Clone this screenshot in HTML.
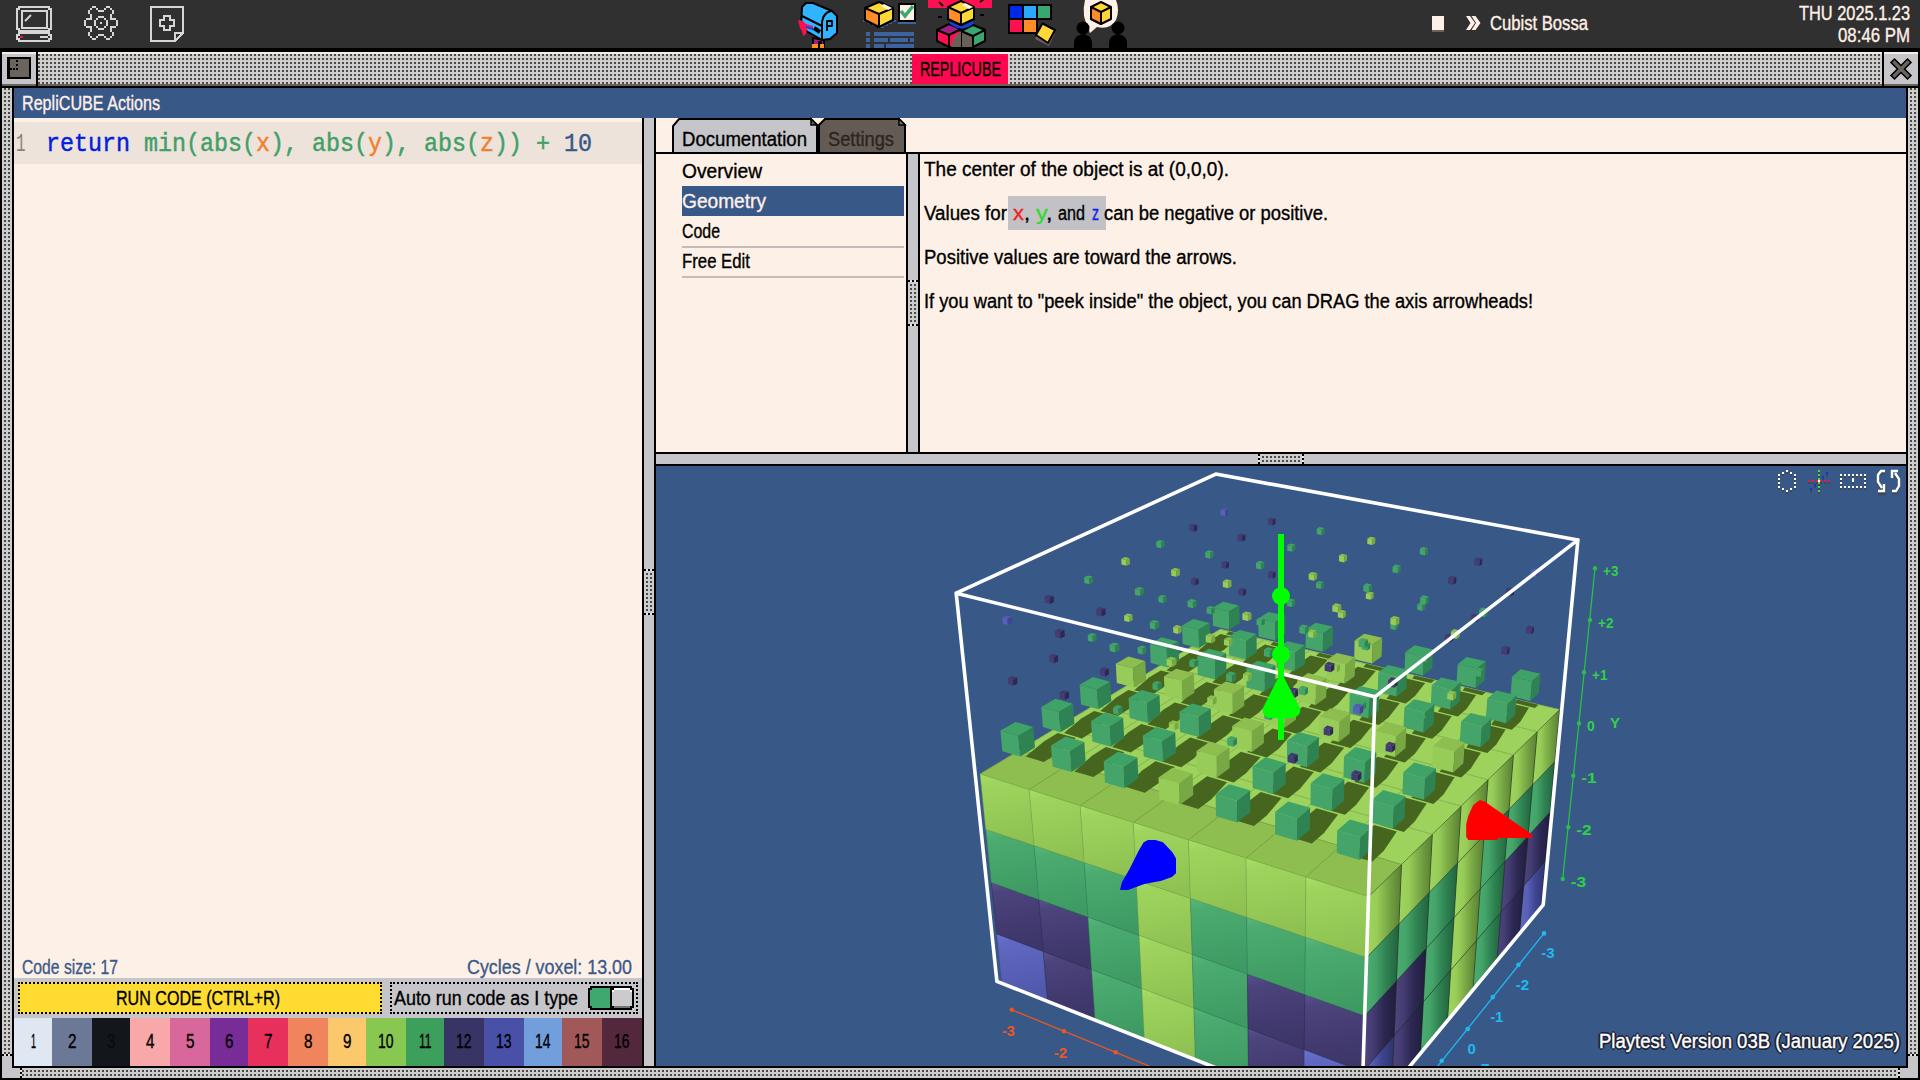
<!DOCTYPE html><html><head><meta charset="utf-8"><title>Replicube</title><style>
html,body{margin:0;padding:0;background:#000;}
body{width:1920px;height:1080px;position:relative;overflow:hidden;font-family:"Liberation Sans",sans-serif;}
.a{position:absolute;}
.tx{position:absolute;white-space:nowrap;line-height:1;transform-origin:0 0;display:inline-block;-webkit-text-stroke:0.35px currentColor;}
.dots{background-color:#c6c6ca;background-image:linear-gradient(#544c44,#544c44);background-size:4px 4px;}
.dotp{background-color:#4c4a40;background-image:linear-gradient(#cdcdd0 50%,transparent 50%),linear-gradient(90deg,#cdcdd0 50%,transparent 50%);background-size:4px 4px;}
.code{position:absolute;left:45.5px;top:130px;font-family:"Liberation Mono",monospace;font-size:25.6px;line-height:30px;white-space:pre;-webkit-text-stroke:0.45px currentColor;transform:scaleX(0.9115);transform-origin:0 0;}
</style></head><body>
<div class="a" style="left:0px;top:0px;width:1920px;height:48px;background:#303030;"></div>
<div class="a" style="left:0px;top:48px;width:1920px;height:4px;background:#000;"></div>
<div class="a dotp" style="left:0;top:52px;width:1920px;height:34px;background-position:0 0"></div>
<div class="a" style="left:0px;top:52px;width:1920px;height:2px;background:#f4ece6;"></div>
<div class="a" style="left:0px;top:84px;width:1920px;height:2px;background:#6a625a;"></div>
<div class="a" style="left:0px;top:52px;width:2px;height:1028px;background:#000;"></div>
<div class="a" style="left:1918px;top:52px;width:2px;height:1028px;background:#000;"></div>
<div class="a" style="left:2px;top:54px;width:34px;height:30px;background:#c6c6ca;"></div>
<div class="a" style="left:2px;top:52px;width:34px;height:2px;background:#f4ece6;"></div>
<div class="a" style="left:2px;top:84px;width:34px;height:2px;background:#6a625a;"></div>
<div class="a" style="left:36px;top:52px;width:2px;height:34px;background:#000;"></div>
<div class="a" style="left:7px;top:57px;width:24px;height:22px;background:#000;"></div>
<div class="a" style="left:10px;top:59px;width:19px;height:18px;background:#6b645e;"></div>
<div class="a" style="left:16px;top:60px;width:2px;height:2px;background:#000;"></div>
<div class="a" style="left:16px;top:64px;width:2px;height:2px;background:#000;"></div>
<div class="a" style="left:10px;top:68px;width:2px;height:2px;background:#000;"></div>
<div class="a" style="left:13px;top:68px;width:2px;height:2px;background:#000;"></div>
<div class="a" style="left:16px;top:68px;width:2px;height:2px;background:#000;"></div>
<div class="a" style="left:1882px;top:52px;width:2px;height:34px;background:#000;"></div>
<div class="a" style="left:1884px;top:54px;width:34px;height:30px;background:#c6c6ca;"></div>
<div class="a" style="left:1884px;top:52px;width:34px;height:2px;background:#f4ece6;"></div>
<div class="a" style="left:1884px;top:84px;width:34px;height:2px;background:#6a625a;"></div>
<svg class="a" style="left:1888px;top:56px" width="26" height="26" viewBox="0 0 26 26"><path d="M6.500 6.500L19.500 19.500M19.500 6.500L6.500 19.500" stroke="#000" stroke-width="6.5" stroke-linecap="square"/><path d="M6.500 6.500L19.500 19.500M19.500 6.500L6.500 19.500" stroke="#6b645e" stroke-width="3.4" stroke-linecap="square"/></svg>
<div class="a" style="left:912px;top:54px;width:96px;height:30px;background:#ff0850;"></div>
<div class="a" style="left:0px;top:86px;width:1920px;height:2px;background:#000;"></div>
<div class="a dotp" style="left:2px;top:88px;width:10px;height:966px;background-position:0 -2px"></div>
<div class="a" style="left:12px;top:88px;width:2px;height:980px;background:#000;"></div>
<div class="a dotp" style="left:1908px;top:88px;width:10px;height:966px;background-position:0 -2px"></div>
<div class="a" style="left:1906px;top:88px;width:2px;height:980px;background:#000;"></div>
<div class="a" style="left:2px;top:1066px;width:1916px;height:2px;background:#000;"></div>
<div class="a dotp" style="left:22px;top:1068px;width:1876px;height:10px;background-position:-2px 0"></div>
<div class="a" style="left:2px;top:1078px;width:1916px;height:2px;background:#000;"></div>
<div class="a" style="left:2px;top:1054px;width:10px;height:24px;background:#c6c6ca;"></div>
<div class="a" style="left:12px;top:1068px;width:8px;height:10px;background:#c6c6ca;"></div>
<div class="a" style="left:1908px;top:1054px;width:10px;height:24px;background:#c6c6ca;"></div>
<div class="a" style="left:1900px;top:1068px;width:8px;height:10px;background:#c6c6ca;"></div>
<div class="a" style="left:2px;top:1054px;width:10px;height:2px;background:#000;background:repeating-linear-gradient(90deg,#000 0 2px,#e4e4e6 2px 4px);"></div>
<div class="a" style="left:1908px;top:1054px;width:10px;height:2px;background:#000;background:repeating-linear-gradient(90deg,#000 0 2px,#e4e4e6 2px 4px);"></div>
<div class="a" style="left:20px;top:1068px;width:2px;height:10px;background:#000;background:repeating-linear-gradient(180deg,#000 0 2px,#e4e4e6 2px 4px);"></div>
<div class="a" style="left:1898px;top:1068px;width:2px;height:10px;background:#000;background:repeating-linear-gradient(180deg,#000 0 2px,#e4e4e6 2px 4px);"></div>
<div class="a" style="left:14px;top:88px;width:1892px;height:30px;background:#385888;"></div>
<div class="a" style="left:14px;top:118px;width:628px;height:860px;background:#fdf1e7;"></div>
<div class="a" style="left:14px;top:122px;width:628px;height:42px;background:#ede3da;"></div>
<div class="a" style="left:642px;top:118px;width:2px;height:948px;background:#000;"></div>
<div class="a" style="left:644px;top:118px;width:10px;height:948px;background:#c6c6ca;"></div>
<div class="a" style="left:654px;top:118px;width:2px;height:948px;background:#000;"></div>
<div class="a dotp" style="left:644px;top:571px;width:10px;height:42px;background-position:0 0"></div>
<div class="a" style="left:644px;top:569px;width:10px;height:2px;background:#000;background:repeating-linear-gradient(90deg,#000 0 2px,#e4e4e6 2px 4px);"></div>
<div class="a" style="left:644px;top:613px;width:10px;height:2px;background:#000;background:repeating-linear-gradient(90deg,#000 0 2px,#e4e4e6 2px 4px);"></div>
<div class="a" style="left:656px;top:118px;width:1250px;height:334px;background:#fdf1e7;"></div>
<div class="a" style="left:656px;top:152px;width:1250px;height:2px;background:#000;"></div>
<div class="a" style="left:906px;top:154px;width:2px;height:298px;background:#000;"></div>
<div class="a" style="left:908px;top:154px;width:10px;height:298px;background:#c6c6ca;"></div>
<div class="a" style="left:918px;top:154px;width:2px;height:298px;background:#000;"></div>
<div class="a dotp" style="left:908px;top:282px;width:10px;height:42px;background-position:0 0"></div>
<div class="a" style="left:908px;top:280px;width:10px;height:2px;background:#000;background:repeating-linear-gradient(90deg,#000 0 2px,#e4e4e6 2px 4px);"></div>
<div class="a" style="left:908px;top:324px;width:10px;height:2px;background:#000;background:repeating-linear-gradient(90deg,#000 0 2px,#e4e4e6 2px 4px);"></div>
<svg class="a" style="left:660px;top:116px" width="260" height="38" viewBox="660 116 260 38">
<path d="M673 153V126L679 119H811L817 125V153Z" fill="#c6c6ca" stroke="#000" stroke-width="2"/>
<path d="M811 119V125H817Z" fill="#6b645e" stroke="#000" stroke-width="1.5"/>
<path d="M819 153V125L825 119H899L905 125V153Z" fill="#645c54" stroke="#000" stroke-width="2"/>
<path d="M899 119V125H905Z" fill="#8a827a" stroke="#000" stroke-width="1.5"/>
</svg>
<div class="a" style="left:682px;top:186px;width:222px;height:30px;background:#385888;"></div>
<div class="a" style="left:682px;top:246px;width:222px;height:2px;background:#c4bcba;"></div>
<div class="a" style="left:682px;top:276px;width:222px;height:2px;background:#c4bcba;"></div>
<div class="a" style="left:1008px;top:196px;width:98px;height:34px;background:#c2c2c6;"></div>
<div class="a" style="left:656px;top:452px;width:1250px;height:2px;background:#000;"></div>
<div class="a" style="left:656px;top:454px;width:1250px;height:10px;background:#c6c6ca;"></div>
<div class="a" style="left:656px;top:464px;width:1250px;height:2px;background:#000;"></div>
<div class="a dotp" style="left:1260px;top:454px;width:42px;height:10px;background-position:0 0"></div>
<div class="a" style="left:1258px;top:454px;width:2px;height:10px;background:#000;background:repeating-linear-gradient(180deg,#000 0 2px,#e4e4e6 2px 4px);"></div>
<div class="a" style="left:1302px;top:454px;width:2px;height:10px;background:#000;background:repeating-linear-gradient(180deg,#000 0 2px,#e4e4e6 2px 4px);"></div>
<div class="a" style="left:14px;top:978px;width:628px;height:40px;background:#c6c6ca;"></div>
<div class="a" style="left:18px;top:982px;width:364px;height:32px;background:#000;background:#ffdc32;outline:0;border:2px dotted #000;box-sizing:border-box;"></div>
<div class="a" style="left:390px;top:982px;width:248px;height:32px;background:#c6c6ca;border:2px dotted #000;box-sizing:border-box;"></div>
<svg class="a" style="left:586px;top:984px" width="50" height="28" viewBox="586 984 50 28" shape-rendering="crispEdges"><path d="M590 986H632V988H634V1008H632V1010H590V1008H588V988H590Z" fill="#000"/><rect x="590" y="988" width="20" height="20" fill="#3ea86e"/><rect x="612" y="988" width="20" height="20" fill="#cbcbcd"/><rect x="614" y="988" width="16" height="2" fill="#ffffff"/><rect x="612" y="990" width="2" height="2" fill="#ffffff"/><rect x="630" y="990" width="2" height="2" fill="#ffffff"/><rect x="614" y="1006" width="16" height="2" fill="#7a726c"/><rect x="590" y="988" width="2" height="2" fill="#000"/><rect x="590" y="1006" width="2" height="2" fill="#000"/><rect x="630" y="988" width="2" height="2" fill="#000"/><rect x="630" y="1006" width="2" height="2" fill="#000"/><rect x="612" y="988" width="2" height="2" fill="#000"/><rect x="612" y="1006" width="2" height="2" fill="#000"/></svg>
<div class="a" style="left:14px;top:1018px;width:38px;height:48px;background:#dfe7f3;"></div>
<div class="a" style="left:52px;top:1018px;width:40px;height:48px;background:#6b7896;"></div>
<div class="a" style="left:92px;top:1018px;width:38px;height:48px;background:#13171b;"></div>
<div class="a" style="left:130px;top:1018px;width:40px;height:48px;background:#f8a8a8;"></div>
<div class="a" style="left:170px;top:1018px;width:40px;height:48px;background:#d8689c;"></div>
<div class="a" style="left:210px;top:1018px;width:38px;height:48px;background:#782c98;"></div>
<div class="a" style="left:248px;top:1018px;width:40px;height:48px;background:#e8305c;"></div>
<div class="a" style="left:288px;top:1018px;width:40px;height:48px;background:#f0845c;"></div>
<div class="a" style="left:328px;top:1018px;width:38px;height:48px;background:#fcc86c;"></div>
<div class="a" style="left:366px;top:1018px;width:40px;height:48px;background:#88c850;"></div>
<div class="a" style="left:406px;top:1018px;width:38px;height:48px;background:#3ca05c;"></div>
<div class="a" style="left:444px;top:1018px;width:40px;height:48px;background:#383466;"></div>
<div class="a" style="left:484px;top:1018px;width:40px;height:48px;background:#4850a8;"></div>
<div class="a" style="left:524px;top:1018px;width:38px;height:48px;background:#729edc;"></div>
<div class="a" style="left:562px;top:1018px;width:40px;height:48px;background:#a05858;"></div>
<div class="a" style="left:602px;top:1018px;width:40px;height:48px;background:#54283c;"></div>
<div class="code"><span style="color:#0020e0">return</span> <span style="color:#40a068">min(abs(</span><span style="color:#f08030">x</span><span style="color:#40a068">), abs(</span><span style="color:#f08030">y</span><span style="color:#40a068">), abs(</span><span style="color:#f08030">z</span><span style="color:#40a068">)) +</span> <span style="color:#385888">10</span></div>
<div class="a" style="left:15.5px;top:130px;font-family:'Liberation Mono',monospace;font-size:25.6px;line-height:30px;color:#8a8078;transform:scaleX(0.62);transform-origin:0 0;">1</div>
<svg class="a" style="left:656px;top:466px;background:#385888" width="1250" height="600" viewBox="656 466 1250 600">
<defs><linearGradient id="gz0" x1="0" y1="0" x2="0.15" y2="1"><stop offset="0" stop-color="#a8e066"/><stop offset="0.16" stop-color="#9ed45e"/><stop offset="0.55" stop-color="#98cc58"/><stop offset="1" stop-color="#8ec152"/></linearGradient><linearGradient id="gx0" x1="0" y1="0" x2="1" y2="0"><stop offset="0" stop-color="#9fd55e"/><stop offset="0.3" stop-color="#98cc58"/><stop offset="0.62" stop-color="#78a844"/><stop offset="1" stop-color="#5a7e33"/></linearGradient><linearGradient id="gz1" x1="0" y1="0" x2="0.15" y2="1"><stop offset="0" stop-color="#58b87c"/><stop offset="0.16" stop-color="#4cac70"/><stop offset="0.55" stop-color="#45a469"/><stop offset="1" stop-color="#3e9a62"/></linearGradient><linearGradient id="gx1" x1="0" y1="0" x2="1" y2="0"><stop offset="0" stop-color="#4dad71"/><stop offset="0.3" stop-color="#45a469"/><stop offset="0.62" stop-color="#2f8352"/><stop offset="1" stop-color="#23623e"/></linearGradient><linearGradient id="gz2" x1="0" y1="0" x2="0.15" y2="1"><stop offset="0" stop-color="#5a528b"/><stop offset="0.16" stop-color="#4c447c"/><stop offset="0.55" stop-color="#443c72"/><stop offset="1" stop-color="#3d3668"/></linearGradient><linearGradient id="gx2" x1="0" y1="0" x2="1" y2="0"><stop offset="0" stop-color="#4e467d"/><stop offset="0.3" stop-color="#443c72"/><stop offset="0.62" stop-color="#2c2852"/><stop offset="1" stop-color="#211e3e"/></linearGradient><linearGradient id="gz3" x1="0" y1="0" x2="0.15" y2="1"><stop offset="0" stop-color="#6c74cf"/><stop offset="0.16" stop-color="#6068c1"/><stop offset="0.55" stop-color="#5860b8"/><stop offset="1" stop-color="#5058ac"/></linearGradient><linearGradient id="gx3" x1="0" y1="0" x2="1" y2="0"><stop offset="0" stop-color="#6169c2"/><stop offset="0.3" stop-color="#5860b8"/><stop offset="0.62" stop-color="#3f4590"/><stop offset="1" stop-color="#2f346c"/></linearGradient></defs>
<polygon points="1220.4,629.3 1264.3,639.7 1236.1,657.7 1191.5,646.7" fill="#9dd25d" stroke="#8ab952" stroke-width="1"/>
<polygon points="1264.3,639.7 1309.6,650.5 1282.2,669.0 1236.1,657.7" fill="#9dd25d" stroke="#8ab952" stroke-width="1"/>
<polygon points="1191.5,646.7 1236.1,657.7 1206.4,676.6 1161.1,665.1" fill="#9dd25d" stroke="#8ab952" stroke-width="1"/>
<polygon points="1309.6,650.5 1356.4,661.5 1329.8,680.7 1282.2,669.0" fill="#9dd25d" stroke="#8ab952" stroke-width="1"/>
<polygon points="1236.1,657.7 1282.2,669.0 1253.2,688.6 1206.4,676.6" fill="#9dd25d" stroke="#8ab952" stroke-width="1"/>
<polygon points="1523.7,885.7 1545.4,860.6 1540.9,907.5 1519.5,933.5" fill="url(#gx3)" stroke="#10200c" stroke-width="1" stroke-opacity="0.35"/>
<polygon points="1356.4,661.5 1404.7,673.0 1379.0,692.8 1329.8,680.7" fill="#9dd25d" stroke="#8ab952" stroke-width="1"/>
<polygon points="1161.1,665.1 1206.4,676.6 1175.0,696.7 1128.9,684.5" fill="#9dd25d" stroke="#8ab952" stroke-width="1"/>
<polygon points="1282.2,669.0 1329.8,680.7 1301.7,701.0 1253.2,688.6" fill="#9dd25d" stroke="#8ab952" stroke-width="1"/>
<polygon points="1528.0,836.2 1550.0,812.0 1545.4,860.6 1523.7,885.7" fill="url(#gx2)" stroke="#10200c" stroke-width="1" stroke-opacity="0.35"/>
<polygon points="1404.7,673.0 1454.6,684.8 1429.9,705.3 1379.0,692.8" fill="#9dd25d" stroke="#8ab952" stroke-width="1"/>
<polygon points="1206.4,676.6 1253.2,688.6 1222.6,709.3 1175.0,696.7" fill="#9dd25d" stroke="#8ab952" stroke-width="1"/>
<polygon points="1500.8,912.2 1523.7,885.7 1519.5,933.5 1496.9,960.9" fill="url(#gx2)" stroke="#10200c" stroke-width="1" stroke-opacity="0.35"/>
<polygon points="1329.8,680.7 1379.0,692.8 1351.8,713.8 1301.7,701.0" fill="#9dd25d" stroke="#8ab952" stroke-width="1"/>
<polygon points="1128.9,684.5 1175.0,696.7 1141.7,717.9 1094.9,704.9" fill="#9dd25d" stroke="#8ab952" stroke-width="1"/>
<polygon points="1532.5,784.9 1554.7,761.8 1550.0,812.0 1528.0,836.2" fill="url(#gx1)" stroke="#10200c" stroke-width="1" stroke-opacity="0.35"/>
<polygon points="1454.6,684.8 1506.2,697.1 1482.6,718.3 1429.9,705.3" fill="#9dd25d" stroke="#8ab952" stroke-width="1"/>
<polygon points="1253.2,688.6 1301.7,701.0 1272.0,722.4 1222.6,709.3" fill="#9dd25d" stroke="#8ab952" stroke-width="1"/>
<polygon points="1504.8,861.7 1528.0,836.2 1523.7,885.7 1500.8,912.2" fill="url(#gx2)" stroke="#10200c" stroke-width="1" stroke-opacity="0.35"/>
<polygon points="1379.0,692.8 1429.9,705.3 1403.8,727.0 1351.8,713.8" fill="#9dd25d" stroke="#8ab952" stroke-width="1"/>
<polygon points="1175.0,696.7 1222.6,709.3 1190.2,731.3 1141.7,717.9" fill="#9dd25d" stroke="#8ab952" stroke-width="1"/>
<polygon points="1506.2,697.1 1559.6,709.7 1537.2,731.7 1482.6,718.3" fill="#9dd25d" stroke="#8ab952" stroke-width="1"/>
<polygon points="1537.2,731.7 1559.6,709.7 1554.7,761.8 1532.5,784.9" fill="url(#gx0)" stroke="#10200c" stroke-width="1" stroke-opacity="0.35"/>
<polygon points="1476.5,940.3 1500.8,912.2 1496.9,960.9 1472.9,989.9" fill="url(#gx1)" stroke="#10200c" stroke-width="1" stroke-opacity="0.35"/>
<polygon points="1301.7,701.0 1351.8,713.8 1323.1,736.0 1272.0,722.4" fill="#9dd25d" stroke="#8ab952" stroke-width="1"/>
<polygon points="1094.9,704.9 1141.7,717.9 1106.5,740.3 1058.9,726.6" fill="#9dd25d" stroke="#8ab952" stroke-width="1"/>
<polygon points="1509.0,809.3 1532.5,784.9 1528.0,836.2 1504.8,861.7" fill="url(#gx1)" stroke="#10200c" stroke-width="1" stroke-opacity="0.35"/>
<polygon points="1429.9,705.3 1482.6,718.3 1457.6,740.8 1403.8,727.0" fill="#9dd25d" stroke="#8ab952" stroke-width="1"/>
<polygon points="996.6,933.8 1043.3,951.4 1047.6,1001.4 1001.7,983.3" fill="url(#gz3)" stroke="#3f4590" stroke-width="1" stroke-opacity="0.45"/>
<polygon points="1222.6,709.3 1272.0,722.4 1240.4,745.2 1190.2,731.3" fill="#9dd25d" stroke="#8ab952" stroke-width="1"/>
<polygon points="1480.2,888.8 1504.8,861.7 1500.8,912.2 1476.5,940.3" fill="url(#gx1)" stroke="#10200c" stroke-width="1" stroke-opacity="0.35"/>
<polygon points="1351.8,713.8 1403.8,727.0 1376.1,750.1 1323.1,736.0" fill="#9dd25d" stroke="#8ab952" stroke-width="1"/>
<polygon points="1141.7,717.9 1190.2,731.3 1155.8,754.6 1106.5,740.3" fill="#9dd25d" stroke="#8ab952" stroke-width="1"/>
<polygon points="1482.6,718.3 1537.2,731.7 1513.4,755.0 1457.6,740.8" fill="#9dd25d" stroke="#8ab952" stroke-width="1"/>
<polygon points="1513.4,755.0 1537.2,731.7 1532.5,784.9 1509.0,809.3" fill="url(#gx0)" stroke="#10200c" stroke-width="1" stroke-opacity="0.35"/>
<polygon points="1043.3,951.4 1091.6,969.6 1095.1,1020.1 1047.6,1001.4" fill="url(#gz2)" stroke="#2c2852" stroke-width="1" stroke-opacity="0.45"/>
<polygon points="991.3,882.6 1038.8,899.5 1043.3,951.4 996.6,933.8" fill="url(#gz2)" stroke="#2c2852" stroke-width="1" stroke-opacity="0.45"/>
<polygon points="1450.7,970.1 1476.5,940.3 1472.9,989.9 1447.5,1020.6" fill="url(#gx0)" stroke="#10200c" stroke-width="1" stroke-opacity="0.35"/>
<polygon points="1272.0,722.4 1323.1,736.0 1292.5,759.6 1240.4,745.2" fill="#9dd25d" stroke="#8ab952" stroke-width="1"/>
<polygon points="1058.9,726.6 1106.5,740.3 1069.0,764.2 1020.7,749.6" fill="#9dd25d" stroke="#8ab952" stroke-width="1"/>
<polygon points="1484.0,835.3 1509.0,809.3 1504.8,861.7 1480.2,888.8" fill="url(#gx1)" stroke="#10200c" stroke-width="1" stroke-opacity="0.35"/>
<polygon points="1403.8,727.0 1457.6,740.8 1431.0,764.6 1376.1,750.1" fill="#9dd25d" stroke="#8ab952" stroke-width="1"/>
<polygon points="1190.2,731.3 1240.4,745.2 1206.9,769.3 1155.8,754.6" fill="#9dd25d" stroke="#8ab952" stroke-width="1"/>
<polygon points="1091.6,969.6 1141.8,988.4 1144.4,1039.6 1095.1,1020.1" fill="url(#gz1)" stroke="#2f8352" stroke-width="1" stroke-opacity="0.45"/>
<polygon points="1038.8,899.5 1088.0,917.1 1091.6,969.6 1043.3,951.4" fill="url(#gz2)" stroke="#2c2852" stroke-width="1" stroke-opacity="0.45"/>
<polygon points="985.8,829.4 1034.1,845.6 1038.8,899.5 991.3,882.6" fill="url(#gz1)" stroke="#2f8352" stroke-width="1" stroke-opacity="0.45"/>
<polygon points="1454.0,917.6 1480.2,888.8 1476.5,940.3 1450.7,970.1" fill="url(#gx0)" stroke="#10200c" stroke-width="1" stroke-opacity="0.35"/>
<polygon points="1323.1,736.0 1376.1,750.1 1346.6,774.5 1292.5,759.6" fill="#9dd25d" stroke="#8ab952" stroke-width="1"/>
<polygon points="1106.5,740.3 1155.8,754.6 1119.2,779.3 1069.0,764.2" fill="#9dd25d" stroke="#8ab952" stroke-width="1"/>
<polygon points="1457.6,740.8 1513.4,755.0 1488.0,779.8 1431.0,764.6" fill="#9dd25d" stroke="#8ab952" stroke-width="1"/>
<polygon points="1488.0,779.8 1513.4,755.0 1509.0,809.3 1484.0,835.3" fill="url(#gx0)" stroke="#10200c" stroke-width="1" stroke-opacity="0.35"/>
<polygon points="1423.3,1001.8 1450.7,970.1 1447.5,1020.6 1420.5,1053.3" fill="url(#gx1)" stroke="#10200c" stroke-width="1" stroke-opacity="0.35"/>
<polygon points="1240.4,745.2 1292.5,759.6 1260.0,784.7 1206.9,769.3" fill="#9dd25d" stroke="#8ab952" stroke-width="1"/>
<polygon points="1141.8,988.4 1193.9,1008.0 1195.5,1059.7 1144.4,1039.6" fill="url(#gz0)" stroke="#78a844" stroke-width="1" stroke-opacity="0.45"/>
<polygon points="1088.0,917.1 1139.1,935.3 1141.8,988.4 1091.6,969.6" fill="url(#gz1)" stroke="#2f8352" stroke-width="1" stroke-opacity="0.45"/>
<polygon points="1034.1,845.6 1084.2,862.5 1088.0,917.1 1038.8,899.5" fill="url(#gz1)" stroke="#2f8352" stroke-width="1" stroke-opacity="0.45"/>
<polygon points="1020.7,749.6 1069.0,764.2 1029.2,789.6 980.1,774.1" fill="#8ebe50" stroke="#7da746" stroke-width="1"/>
<polygon points="980.1,774.1 1029.2,789.6 1034.1,845.6 985.8,829.4" fill="url(#gz0)" stroke="#78a844" stroke-width="1" stroke-opacity="0.45"/>
<polygon points="1457.5,863.0 1484.0,835.3 1480.2,888.8 1454.0,917.6" fill="url(#gx0)" stroke="#10200c" stroke-width="1" stroke-opacity="0.35"/>
<polygon points="1376.1,750.1 1431.0,764.6 1402.7,790.1 1346.6,774.5" fill="#9dd25d" stroke="#8ab952" stroke-width="1"/>
<polygon points="1155.8,754.6 1206.9,769.3 1171.3,795.0 1119.2,779.3" fill="#9dd25d" stroke="#8ab952" stroke-width="1"/>
<polygon points="1426.2,948.2 1454.0,917.6 1450.7,970.1 1423.3,1001.8" fill="url(#gx1)" stroke="#10200c" stroke-width="1" stroke-opacity="0.35"/>
<polygon points="1292.5,759.6 1346.6,774.5 1315.2,800.6 1260.0,784.7" fill="#9dd25d" stroke="#8ab952" stroke-width="1"/>
<polygon points="1193.9,1008.0 1248.0,1028.4 1248.6,1080.7 1195.5,1059.7" fill="url(#gz1)" stroke="#2f8352" stroke-width="1" stroke-opacity="0.45"/>
<polygon points="1139.1,935.3 1192.2,954.3 1193.9,1008.0 1141.8,988.4" fill="url(#gz0)" stroke="#78a844" stroke-width="1" stroke-opacity="0.45"/>
<polygon points="1084.2,862.5 1136.2,880.0 1139.1,935.3 1088.0,917.1" fill="url(#gz1)" stroke="#2f8352" stroke-width="1" stroke-opacity="0.45"/>
<polygon points="1069.0,764.2 1119.2,779.3 1080.2,805.7 1029.2,789.6" fill="#8ebe50" stroke="#7da746" stroke-width="1"/>
<polygon points="1029.2,789.6 1080.2,805.7 1084.2,862.5 1034.1,845.6" fill="url(#gz0)" stroke="#78a844" stroke-width="1" stroke-opacity="0.45"/>
<polygon points="1431.0,764.6 1488.0,779.8 1461.1,806.2 1402.7,790.1" fill="#9dd25d" stroke="#8ab952" stroke-width="1"/>
<polygon points="1461.1,806.2 1488.0,779.8 1484.0,835.3 1457.5,863.0" fill="url(#gx0)" stroke="#10200c" stroke-width="1" stroke-opacity="0.35"/>
<polygon points="1394.1,1035.6 1423.3,1001.8 1420.5,1053.3 1391.8,1088.0" fill="url(#gx2)" stroke="#10200c" stroke-width="1" stroke-opacity="0.35"/>
<polygon points="1206.9,769.3 1260.0,784.7 1225.4,811.4 1171.3,795.0" fill="#9dd25d" stroke="#8ab952" stroke-width="1"/>
<polygon points="1429.2,892.4 1457.5,863.0 1454.0,917.6 1426.2,948.2" fill="url(#gx1)" stroke="#10200c" stroke-width="1" stroke-opacity="0.35"/>
<polygon points="1346.6,774.5 1402.7,790.1 1372.6,817.1 1315.2,800.6" fill="#9dd25d" stroke="#8ab952" stroke-width="1"/>
<polygon points="1248.0,1028.4 1304.3,1049.6 1303.8,1102.5 1248.6,1080.7" fill="url(#gz2)" stroke="#2c2852" stroke-width="1" stroke-opacity="0.45"/>
<polygon points="1192.2,954.3 1247.4,974.0 1248.0,1028.4 1193.9,1008.0" fill="url(#gz1)" stroke="#2f8352" stroke-width="1" stroke-opacity="0.45"/>
<polygon points="1136.2,880.0 1190.4,898.3 1192.2,954.3 1139.1,935.3" fill="url(#gz0)" stroke="#78a844" stroke-width="1" stroke-opacity="0.45"/>
<polygon points="1119.2,779.3 1171.3,795.0 1133.3,822.5 1080.2,805.7" fill="#8ebe50" stroke="#7da746" stroke-width="1"/>
<polygon points="1080.2,805.7 1133.3,822.5 1136.2,880.0 1084.2,862.5" fill="url(#gz0)" stroke="#78a844" stroke-width="1" stroke-opacity="0.45"/>
<polygon points="1396.4,980.9 1426.2,948.2 1423.3,1001.8 1394.1,1035.6" fill="url(#gx2)" stroke="#10200c" stroke-width="1" stroke-opacity="0.35"/>
<polygon points="1260.0,784.7 1315.2,800.6 1281.8,828.4 1225.4,811.4" fill="#9dd25d" stroke="#8ab952" stroke-width="1"/>
<polygon points="1402.7,790.1 1461.1,806.2 1432.3,834.4 1372.6,817.1" fill="#9dd25d" stroke="#8ab952" stroke-width="1"/>
<polygon points="1432.3,834.4 1461.1,806.2 1457.5,863.0 1429.2,892.4" fill="url(#gx0)" stroke="#10200c" stroke-width="1" stroke-opacity="0.35"/>
<polygon points="1304.3,1049.6 1362.9,1071.6 1361.2,1125.1 1303.8,1102.5" fill="url(#gz3)" stroke="#3f4590" stroke-width="1" stroke-opacity="0.45"/>
<polygon points="1362.9,1071.6 1394.1,1035.6 1391.8,1088.0 1361.2,1125.1" fill="url(#gx3)" stroke="#10200c" stroke-width="1" stroke-opacity="0.35"/>
<polygon points="1247.4,974.0 1304.8,994.5 1304.3,1049.6 1248.0,1028.4" fill="url(#gz2)" stroke="#2c2852" stroke-width="1" stroke-opacity="0.45"/>
<polygon points="1190.4,898.3 1246.7,917.2 1247.4,974.0 1192.2,954.3" fill="url(#gz1)" stroke="#2f8352" stroke-width="1" stroke-opacity="0.45"/>
<polygon points="1171.3,795.0 1225.4,811.4 1188.5,839.9 1133.3,822.5" fill="#8ebe50" stroke="#7da746" stroke-width="1"/>
<polygon points="1133.3,822.5 1188.5,839.9 1190.4,898.3 1136.2,880.0" fill="url(#gz0)" stroke="#78a844" stroke-width="1" stroke-opacity="0.45"/>
<polygon points="1398.9,923.9 1429.2,892.4 1426.2,948.2 1396.4,980.9" fill="url(#gx1)" stroke="#10200c" stroke-width="1" stroke-opacity="0.35"/>
<polygon points="1315.2,800.6 1372.6,817.1 1340.4,846.1 1281.8,828.4" fill="#9dd25d" stroke="#8ab952" stroke-width="1"/>
<polygon points="1304.8,994.5 1364.7,1015.8 1362.9,1071.6 1304.3,1049.6" fill="url(#gz2)" stroke="#2c2852" stroke-width="1" stroke-opacity="0.45"/>
<polygon points="1364.7,1015.8 1396.4,980.9 1394.1,1035.6 1362.9,1071.6" fill="url(#gx2)" stroke="#10200c" stroke-width="1" stroke-opacity="0.35"/>
<polygon points="1246.7,917.2 1305.4,937.0 1304.8,994.5 1247.4,974.0" fill="url(#gz1)" stroke="#2f8352" stroke-width="1" stroke-opacity="0.45"/>
<polygon points="1225.4,811.4 1281.8,828.4 1246.0,858.1 1188.5,839.9" fill="#8ebe50" stroke="#7da746" stroke-width="1"/>
<polygon points="1188.5,839.9 1246.0,858.1 1246.7,917.2 1190.4,898.3" fill="url(#gz0)" stroke="#78a844" stroke-width="1" stroke-opacity="0.45"/>
<polygon points="1372.6,817.1 1432.3,834.4 1401.5,864.5 1340.4,846.1" fill="#9dd25d" stroke="#8ab952" stroke-width="1"/>
<polygon points="1401.5,864.5 1432.3,834.4 1429.2,892.4 1398.9,923.9" fill="url(#gx0)" stroke="#10200c" stroke-width="1" stroke-opacity="0.35"/>
<polygon points="1305.4,937.0 1366.5,957.6 1364.7,1015.8 1304.8,994.5" fill="url(#gz1)" stroke="#2f8352" stroke-width="1" stroke-opacity="0.45"/>
<polygon points="1366.5,957.6 1398.9,923.9 1396.4,980.9 1364.7,1015.8" fill="url(#gx1)" stroke="#10200c" stroke-width="1" stroke-opacity="0.35"/>
<polygon points="1281.8,828.4 1340.4,846.1 1305.9,877.0 1246.0,858.1" fill="#8ebe50" stroke="#7da746" stroke-width="1"/>
<polygon points="1246.0,858.1 1305.9,877.0 1305.4,937.0 1246.7,917.2" fill="url(#gz0)" stroke="#78a844" stroke-width="1" stroke-opacity="0.45"/>
<polygon points="1340.4,846.1 1401.5,864.5 1368.5,896.8 1305.9,877.0" fill="#8ebe50" stroke="#7da746" stroke-width="1"/>
<polygon points="1305.9,877.0 1368.5,896.8 1366.5,957.6 1305.4,937.0" fill="url(#gz0)" stroke="#78a844" stroke-width="1" stroke-opacity="0.45"/>
<polygon points="1368.5,896.8 1401.5,864.5 1398.9,923.9 1366.5,957.6" fill="url(#gx0)" stroke="#10200c" stroke-width="1" stroke-opacity="0.35"/>
<polygon points="1246.8,635.6 1242.6,638.2 1226.0,634.3 1229.2,631.4" fill="#46661f"/>
<polygon points="1220.6,634.1 1237.2,638.0 1224.4,649.6 1213.9,656.1 1197.0,651.9 1210.3,640.3" fill="#46661f"/>
<polygon points="1191.5,651.7 1208.4,655.9 1194.7,668.1 1183.6,675.0 1166.5,670.6 1180.7,658.3" fill="#46661f"/>
<polygon points="1160.8,670.4 1177.9,674.8 1163.4,687.6 1151.6,694.9 1134.2,690.3 1149.4,677.3" fill="#46661f"/>
<polygon points="1128.4,690.1 1145.8,694.7 1130.2,708.3 1117.8,716.0 1100.1,711.1 1116.3,697.4" fill="#46661f"/>
<polygon points="1094.1,710.9 1111.8,715.8 1095.1,730.2 1081.9,738.4 1064.0,733.1 1081.3,718.6" fill="#46661f"/>
<polygon points="1057.8,732.9 1075.7,738.1 1057.8,753.4 1043.8,762.1 1025.6,756.6 1044.2,741.2" fill="#46661f"/>
<polygon points="1291.6,646.2 1287.5,648.9 1270.3,644.8 1273.4,641.9" fill="#46661f"/>
<polygon points="1264.9,644.6 1281.9,648.7 1269.7,660.6 1259.5,667.4 1242.1,663.1 1254.8,651.1" fill="#46661f"/>
<polygon points="1236.5,662.9 1253.8,667.2 1240.8,679.7 1230.0,686.9 1212.3,682.3 1225.9,669.7" fill="#46661f"/>
<polygon points="1206.5,682.1 1224.2,686.7 1210.2,699.9 1198.8,707.5 1180.8,702.7 1195.3,689.3" fill="#46661f"/>
<polygon points="1174.8,702.5 1192.8,707.3 1177.8,721.3 1165.7,729.3 1147.4,724.2 1163.0,710.1" fill="#46661f"/>
<polygon points="1141.3,724.0 1159.6,729.1 1143.5,744.0 1130.7,752.5 1112.0,747.1 1128.8,732.1" fill="#46661f"/>
<polygon points="1105.8,746.9 1124.3,752.3 1107.1,768.1 1093.4,777.1 1074.4,771.4 1092.4,755.4" fill="#46661f"/>
<polygon points="1337.7,657.1 1333.7,659.9 1316.1,655.7 1319.0,652.7" fill="#46661f"/>
<polygon points="1310.5,655.5 1328.1,659.7 1316.6,672.0 1306.6,679.0 1288.6,674.6 1300.7,662.2" fill="#46661f"/>
<polygon points="1282.9,674.4 1300.8,678.8 1288.4,691.8 1277.9,699.2 1259.6,694.5 1272.6,681.4" fill="#46661f"/>
<polygon points="1253.7,694.3 1272.0,699.0 1258.7,712.7 1247.6,720.5 1228.9,715.6 1242.8,701.7" fill="#46661f"/>
<polygon points="1222.9,715.3 1241.5,720.3 1227.2,734.9 1215.4,743.2 1196.4,737.9 1211.3,723.2" fill="#46661f"/>
<polygon points="1190.2,737.6 1209.1,742.9 1193.8,758.4 1181.2,767.2 1161.9,761.6 1177.9,746.0" fill="#46661f"/>
<polygon points="1155.5,761.3 1174.8,766.9 1158.2,783.4 1144.8,792.8 1125.2,786.8 1142.5,770.2" fill="#46661f"/>
<polygon points="1385.4,668.4 1381.6,671.3 1363.3,667.0 1366.1,663.8" fill="#46661f"/>
<polygon points="1357.6,666.8 1375.8,671.1 1364.9,683.8 1355.3,691.1 1336.7,686.5 1348.2,673.7" fill="#46661f"/>
<polygon points="1330.9,686.3 1349.4,690.8 1337.7,704.3 1327.5,711.9 1308.6,707.1 1320.9,693.5" fill="#46661f"/>
<polygon points="1302.6,706.8 1321.5,711.7 1308.9,725.9 1298.1,734.0 1278.8,728.9 1292.0,714.5" fill="#46661f"/>
<polygon points="1272.6,728.6 1291.9,733.8 1278.4,748.9 1266.9,757.5 1247.2,752.0 1261.4,736.8" fill="#46661f"/>
<polygon points="1240.9,751.8 1260.5,757.2 1245.9,773.3 1233.7,782.4 1213.6,776.6 1228.9,760.4" fill="#46661f"/>
<polygon points="1207.1,776.3 1227.1,782.2 1211.3,799.3 1198.3,809.0 1177.9,802.8 1194.4,785.6" fill="#46661f"/>
<polygon points="1434.7,680.1 1431.0,683.1 1412.1,678.6 1414.7,675.4" fill="#46661f"/>
<polygon points="1406.3,678.4 1425.2,682.9 1415.0,696.0 1405.7,703.5 1386.4,698.8 1397.2,685.5" fill="#46661f"/>
<polygon points="1380.5,698.5 1399.7,703.3 1388.7,717.2 1378.9,725.1 1359.3,720.1 1370.8,706.1" fill="#46661f"/>
<polygon points="1353.2,719.8 1372.8,724.9 1360.9,739.6 1350.5,748.0 1330.5,742.7 1342.9,727.8" fill="#46661f"/>
<polygon points="1324.2,742.4 1344.2,747.8 1331.4,763.4 1320.3,772.4 1299.9,766.7 1313.3,750.9" fill="#46661f"/>
<polygon points="1293.4,766.4 1313.8,772.1 1300.0,788.8 1288.2,798.3 1267.3,792.2 1281.9,775.4" fill="#46661f"/>
<polygon points="1260.7,791.9 1281.5,798.0 1266.5,815.8 1253.9,825.9 1232.6,819.4 1248.4,801.5" fill="#46661f"/>
<polygon points="1485.7,692.2 1482.1,695.3 1462.6,690.6 1465.0,687.3" fill="#46661f"/>
<polygon points="1456.7,690.4 1476.1,695.1 1466.7,708.7 1457.8,716.4 1437.9,711.5 1447.9,697.8" fill="#46661f"/>
<polygon points="1431.8,711.3 1451.7,716.2 1441.6,730.6 1432.1,738.8 1411.8,733.6 1422.6,719.1" fill="#46661f"/>
<polygon points="1405.6,733.3 1425.8,738.5 1414.9,753.8 1404.8,762.5 1384.1,757.0 1395.7,741.6" fill="#46661f"/>
<polygon points="1377.6,756.7 1398.4,762.3 1386.5,778.5 1375.8,787.8 1354.6,781.9 1367.2,765.5" fill="#46661f"/>
<polygon points="1348.0,781.6 1369.1,787.5 1356.2,804.8 1344.9,814.7 1323.2,808.4 1336.8,791.0" fill="#46661f"/>
<polygon points="1316.4,808.2 1338.0,814.4 1324.0,832.9 1311.8,843.5 1289.7,836.8 1304.5,818.1" fill="#46661f"/>
<polygon points="1538.4,704.7 1535.0,707.9 1514.8,703.1 1517.0,699.6" fill="#46661f"/>
<polygon points="1508.7,702.9 1528.9,707.7 1520.3,721.7 1511.8,729.8 1491.2,724.7 1500.4,710.5" fill="#46661f"/>
<polygon points="1485.0,724.4 1505.6,729.5 1496.3,744.4 1487.3,752.9 1466.2,747.5 1476.1,732.5" fill="#46661f"/>
<polygon points="1459.8,747.3 1480.9,752.7 1470.8,768.5 1461.2,777.6 1439.7,771.8 1450.4,755.9" fill="#46661f"/>
<polygon points="1433.1,771.6 1454.6,777.3 1443.7,794.2 1433.5,803.9 1411.4,797.7 1423.1,780.7" fill="#46661f"/>
<polygon points="1404.7,797.4 1426.7,803.6 1414.7,821.6 1403.8,831.9 1381.3,825.3 1394.0,807.2" fill="#46661f"/>
<polygon points="1374.3,825.0 1396.8,831.6 1383.8,850.8 1372.2,861.8 1349.1,854.8 1362.9,835.4" fill="#46661f"/>
<polygon points="1223.1,601.7 1239.3,605.4 1228.9,611.6 1212.5,607.8" fill="#3fa266"/><polygon points="1212.5,607.8 1228.9,611.6 1229.2,629.7 1212.9,625.8" fill="#45a469"/><polygon points="1228.9,611.6 1239.3,605.4 1239.6,623.3 1229.2,629.7" fill="#2f8352"/>
<polygon points="1268.6,612.0 1285.4,615.8 1275.2,622.2 1258.3,618.4" fill="#3fa266"/><polygon points="1258.3,618.4 1275.2,622.2 1275.2,640.6 1258.5,636.6" fill="#45a469"/><polygon points="1275.2,622.2 1285.4,615.8 1285.4,634.0 1275.2,640.6" fill="#2f8352"/>
<polygon points="1224.4,560.9 1229.0,561.9 1226.0,563.5 1221.4,562.6" fill="#403a6e"/><polygon points="1221.4,562.6 1226.0,563.5 1226.1,568.7 1221.5,567.7" fill="#443c72"/><polygon points="1226.0,563.5 1229.0,561.9 1229.0,567.1 1226.1,568.7" fill="#2c2852"/>
<polygon points="1193.2,619.0 1209.7,622.9 1198.7,629.4 1182.1,625.5" fill="#3fa266"/><polygon points="1182.1,625.5 1198.7,629.4 1199.1,647.9 1182.7,643.9" fill="#45a469"/><polygon points="1198.7,629.4 1209.7,622.9 1210.1,641.2 1199.1,647.9" fill="#2f8352"/>
<polygon points="1315.7,622.7 1333.0,626.6 1323.1,633.3 1305.7,629.2" fill="#3fa266"/><polygon points="1305.7,629.2 1323.1,633.3 1322.8,651.8 1305.5,647.7" fill="#45a469"/><polygon points="1323.1,633.3 1333.0,626.6 1332.7,645.1 1322.8,651.8" fill="#2f8352"/>
<polygon points="1270.9,570.8 1275.6,571.8 1272.7,573.5 1268.0,572.5" fill="#403a6e"/><polygon points="1268.0,572.5 1272.7,573.5 1272.7,578.7 1268.0,577.7" fill="#443c72"/><polygon points="1272.7,573.5 1275.6,571.8 1275.6,577.0 1272.7,578.7" fill="#2c2852"/>
<polygon points="1223.5,508.4 1228.1,509.3 1225.1,510.8 1220.4,509.9" fill="#545cb2"/><polygon points="1220.4,509.9 1225.1,510.8 1225.2,516.2 1220.5,515.3" fill="#5860b8"/><polygon points="1225.1,510.8 1228.1,509.3 1228.2,514.7 1225.2,516.2" fill="#3f4590"/>
<polygon points="1239.5,629.9 1256.6,633.9 1245.8,640.7 1228.6,636.6" fill="#3fa266"/><polygon points="1228.6,636.6 1245.8,640.7 1246.0,659.4 1229.0,655.2" fill="#45a469"/><polygon points="1245.8,640.7 1256.6,633.9 1256.7,652.5 1246.0,659.4" fill="#2f8352"/>
<polygon points="1193.9,577.5 1198.6,578.5 1195.4,580.2 1190.8,579.2" fill="#403a6e"/><polygon points="1190.8,579.2 1195.4,580.2 1195.6,585.5 1190.9,584.4" fill="#443c72"/><polygon points="1195.4,580.2 1198.6,578.5 1198.7,583.8 1195.6,585.5" fill="#2c2852"/>
<polygon points="1364.3,633.7 1382.2,637.8 1372.7,644.6 1354.6,640.5" fill="#8ebe50"/><polygon points="1354.6,640.5 1372.7,644.6 1372.1,663.5 1354.2,659.2" fill="#98cc58"/><polygon points="1372.7,644.6 1382.2,637.8 1381.6,656.5 1372.1,663.5" fill="#78a844"/>
<polygon points="1318.9,581.0 1323.8,582.0 1321.0,583.8 1316.1,582.7" fill="#3fa266"/><polygon points="1316.1,582.7 1321.0,583.8 1320.9,589.1 1316.0,588.0" fill="#45a469"/><polygon points="1321.0,583.8 1323.8,582.0 1323.7,587.4 1320.9,589.1" fill="#2f8352"/>
<polygon points="1270.7,517.6 1275.5,518.5 1272.6,520.1 1267.8,519.1" fill="#403a6e"/><polygon points="1267.8,519.1 1272.6,520.1 1272.6,525.5 1267.8,524.5" fill="#443c72"/><polygon points="1272.6,520.1 1275.5,518.5 1275.5,523.9 1272.6,525.5" fill="#2c2852"/>
<polygon points="1161.7,637.3 1178.4,641.4 1166.7,648.3 1149.9,644.1" fill="#3fa266"/><polygon points="1149.9,644.1 1166.7,648.3 1167.4,667.2 1150.7,662.9" fill="#45a469"/><polygon points="1166.7,648.3 1178.4,641.4 1179.1,660.1 1167.4,667.2" fill="#2f8352"/>
<polygon points="1287.4,641.2 1305.0,645.3 1294.6,652.3 1276.8,648.1" fill="#3fa266"/><polygon points="1276.8,648.1 1294.6,652.3 1294.5,671.3 1276.8,667.0" fill="#45a469"/><polygon points="1294.6,652.3 1305.0,645.3 1304.9,664.2 1294.5,671.3" fill="#2f8352"/>
<polygon points="1241.2,587.9 1246.0,588.9 1243.0,590.7 1238.1,589.6" fill="#403a6e"/><polygon points="1238.1,589.6 1243.0,590.7 1243.0,596.1 1238.2,595.0" fill="#443c72"/><polygon points="1243.0,590.7 1246.0,588.9 1246.1,594.3 1243.0,596.1" fill="#2c2852"/>
<polygon points="1192.4,523.7 1197.2,524.7 1194.0,526.3 1189.2,525.3" fill="#403a6e"/><polygon points="1189.2,525.3 1194.0,526.3 1194.1,531.7 1189.4,530.8" fill="#443c72"/><polygon points="1194.0,526.3 1197.2,524.7 1197.3,530.2 1194.1,531.7" fill="#2c2852"/>
<polygon points="1414.6,645.2 1433.1,649.4 1423.9,656.4 1405.3,652.1" fill="#3fa266"/><polygon points="1405.3,652.1 1423.9,656.4 1423.0,675.5 1404.5,671.1" fill="#45a469"/><polygon points="1423.9,656.4 1433.1,649.4 1432.2,668.3 1423.0,675.5" fill="#2f8352"/>
<polygon points="1368.6,591.6 1373.7,592.6 1371.0,594.4 1365.9,593.3" fill="#8ebe50"/><polygon points="1365.9,593.3 1371.0,594.4 1370.8,599.8 1365.8,598.7" fill="#98cc58"/><polygon points="1371.0,594.4 1373.7,592.6 1373.5,598.0 1370.8,599.8" fill="#78a844"/>
<polygon points="1319.6,527.0 1324.6,528.0 1321.7,529.6 1316.8,528.6" fill="#3fa266"/><polygon points="1316.8,528.6 1321.7,529.6 1321.7,535.1 1316.7,534.1" fill="#45a469"/><polygon points="1321.7,529.6 1324.6,528.0 1324.5,533.5 1321.7,535.1" fill="#2f8352"/>
<polygon points="1208.7,648.8 1226.1,653.1 1214.7,660.2 1197.2,655.9" fill="#3fa266"/><polygon points="1197.2,655.9 1214.7,660.2 1215.1,679.4 1197.7,674.9" fill="#45a469"/><polygon points="1214.7,660.2 1226.1,653.1 1226.4,672.1 1215.1,679.4" fill="#2f8352"/>
<polygon points="1161.7,594.9 1166.4,596.0 1163.1,597.8 1158.4,596.7" fill="#3fa266"/><polygon points="1158.4,596.7 1163.1,597.8 1163.3,603.2 1158.6,602.1" fill="#45a469"/><polygon points="1163.1,597.8 1166.4,596.0 1166.6,601.4 1163.3,603.2" fill="#2f8352"/>
<polygon points="1336.9,652.9 1355.2,657.2 1345.1,664.4 1326.7,660.0" fill="#8ebe50"/><polygon points="1326.7,660.0 1345.1,664.4 1344.6,683.6 1326.4,679.2" fill="#98cc58"/><polygon points="1345.1,664.4 1355.2,657.2 1354.7,676.2 1344.6,683.6" fill="#78a844"/>
<polygon points="1290.1,598.7 1295.1,599.8 1292.1,601.6 1287.2,600.5" fill="#3fa266"/><polygon points="1287.2,600.5 1292.1,601.6 1292.1,607.0 1287.1,605.9" fill="#45a469"/><polygon points="1292.1,601.6 1295.1,599.8 1295.1,605.2 1292.1,607.0" fill="#2f8352"/>
<polygon points="1240.5,533.4 1245.4,534.4 1242.3,536.0 1237.4,535.0" fill="#403a6e"/><polygon points="1237.4,535.0 1242.3,536.0 1242.4,541.6 1237.5,540.6" fill="#443c72"/><polygon points="1242.3,536.0 1245.4,534.4 1245.5,539.9 1242.4,541.6" fill="#2c2852"/>
<polygon points="1128.3,656.6 1145.3,660.9 1132.9,668.3 1115.8,663.8" fill="#8ebe50"/><polygon points="1115.8,663.8 1132.9,668.3 1133.9,687.6 1116.8,683.0" fill="#98cc58"/><polygon points="1132.9,668.3 1145.3,660.9 1146.2,680.1 1133.9,687.6" fill="#78a844"/>
<polygon points="1466.6,657.0 1485.8,661.3 1477.0,668.6 1457.7,664.2" fill="#3fa266"/><polygon points="1457.7,664.2 1477.0,668.6 1475.7,688.0 1456.5,683.4" fill="#45a469"/><polygon points="1477.0,668.6 1485.8,661.3 1484.5,680.5 1475.7,688.0" fill="#2f8352"/>
<polygon points="1420.1,602.5 1425.3,603.6 1422.7,605.4 1417.5,604.3" fill="#3fa266"/><polygon points="1417.5,604.3 1422.7,605.4 1422.5,610.9 1417.2,609.8" fill="#45a469"/><polygon points="1422.7,605.4 1425.3,603.6 1425.0,609.0 1422.5,610.9" fill="#2f8352"/>
<polygon points="1370.2,536.8 1375.4,537.8 1372.6,539.5 1367.4,538.5" fill="#8ebe50"/><polygon points="1367.4,538.5 1372.6,539.5 1372.4,545.1 1367.3,544.1" fill="#98cc58"/><polygon points="1372.6,539.5 1375.4,537.8 1375.2,543.4 1372.4,545.1" fill="#78a844"/>
<polygon points="1257.5,660.7 1275.4,665.1 1264.3,672.6 1246.3,668.1" fill="#3fa266"/><polygon points="1246.3,668.1 1264.3,672.6 1264.4,692.0 1246.5,687.4" fill="#45a469"/><polygon points="1264.3,672.6 1275.4,665.1 1275.5,684.4 1264.4,692.0" fill="#2f8352"/>
<polygon points="1209.8,606.0 1214.7,607.1 1211.5,609.0 1206.6,607.8" fill="#3fa266"/><polygon points="1206.6,607.8 1211.5,609.0 1211.6,614.4 1206.7,613.3" fill="#45a469"/><polygon points="1211.5,609.0 1214.7,607.1 1214.8,612.6 1211.6,614.4" fill="#2f8352"/>
<polygon points="1159.6,539.9 1164.4,540.9 1161.0,542.6 1156.2,541.6" fill="#3fa266"/><polygon points="1156.2,541.6 1161.0,542.6 1161.2,548.2 1156.4,547.2" fill="#45a469"/><polygon points="1161.0,542.6 1164.4,540.9 1164.6,546.5 1161.2,548.2" fill="#2f8352"/>
<polygon points="1388.2,664.9 1407.1,669.4 1397.4,676.9 1378.3,672.3" fill="#3fa266"/><polygon points="1378.3,672.3 1397.4,676.9 1396.6,696.4 1377.7,691.8" fill="#45a469"/><polygon points="1397.4,676.9 1407.1,669.4 1406.3,688.7 1396.6,696.4" fill="#2f8352"/>
<polygon points="1340.8,609.8 1345.9,611.0 1343.1,612.9 1337.9,611.7" fill="#8ebe50"/><polygon points="1337.9,611.7 1343.1,612.9 1343.0,618.4 1337.8,617.2" fill="#98cc58"/><polygon points="1343.1,612.9 1345.9,611.0 1345.8,616.5 1343.0,618.4" fill="#78a844"/>
<polygon points="1290.3,543.4 1295.4,544.5 1292.4,546.2 1287.3,545.1" fill="#3fa266"/><polygon points="1287.3,545.1 1292.4,546.2 1292.4,551.8 1287.3,550.8" fill="#45a469"/><polygon points="1292.4,546.2 1295.4,544.5 1295.4,550.1 1292.4,551.8" fill="#2f8352"/>
<polygon points="1176.2,668.8 1193.8,673.3 1181.7,680.9 1163.9,676.3" fill="#8ebe50"/><polygon points="1163.9,676.3 1181.7,680.9 1182.3,700.5 1164.7,695.8" fill="#98cc58"/><polygon points="1181.7,680.9 1193.8,673.3 1194.4,692.7 1182.3,700.5" fill="#78a844"/>
<polygon points="1127.6,613.4 1132.4,614.6 1128.9,616.5 1124.1,615.3" fill="#8ebe50"/><polygon points="1124.1,615.3 1128.9,616.5 1129.2,622.0 1124.3,620.9" fill="#98cc58"/><polygon points="1128.9,616.5 1132.4,614.6 1132.7,620.1 1129.2,622.0" fill="#78a844"/>
<polygon points="1520.5,669.2 1540.4,673.7 1532.0,681.3 1512.0,676.7" fill="#3fa266"/><polygon points="1512.0,676.7 1532.0,681.3 1530.4,700.9 1510.5,696.2" fill="#45a469"/><polygon points="1532.0,681.3 1540.4,673.7 1538.7,693.1 1530.4,700.9" fill="#2f8352"/>
<polygon points="1473.3,613.8 1478.8,614.9 1476.3,616.9 1470.8,615.7" fill="#403a6e"/><polygon points="1470.8,615.7 1476.3,616.9 1475.9,622.4 1470.5,621.2" fill="#443c72"/><polygon points="1476.3,616.9 1478.8,614.9 1478.4,620.5 1475.9,622.4" fill="#2c2852"/>
<polygon points="1422.6,547.0 1427.9,548.0 1425.3,549.7 1420.0,548.7" fill="#3fa266"/><polygon points="1420.0,548.7 1425.3,549.7 1425.0,555.4 1419.7,554.3" fill="#45a469"/><polygon points="1425.3,549.7 1427.9,548.0 1427.7,553.7 1425.0,555.4" fill="#2f8352"/>
<polygon points="1307.9,673.1 1326.5,677.7 1315.8,685.3 1297.1,680.7" fill="#8ebe50"/><polygon points="1297.1,680.7 1315.8,685.3 1315.6,705.0 1297.0,700.3" fill="#98cc58"/><polygon points="1315.8,685.3 1326.5,677.7 1326.2,697.2 1315.6,705.0" fill="#78a844"/>
<polygon points="1259.6,617.4 1264.7,618.6 1261.6,620.5 1256.5,619.3" fill="#3fa266"/><polygon points="1256.5,619.3 1261.6,620.5 1261.6,626.1 1256.5,624.9" fill="#45a469"/><polygon points="1261.6,620.5 1264.7,618.6 1264.7,624.1 1261.6,626.1" fill="#2f8352"/>
<polygon points="1208.5,550.2 1213.5,551.2 1210.2,553.0 1205.2,551.9" fill="#3fa266"/><polygon points="1205.2,551.9 1210.2,553.0 1210.4,558.7 1205.4,557.6" fill="#45a469"/><polygon points="1210.2,553.0 1213.5,551.2 1213.6,556.9 1210.4,558.7" fill="#2f8352"/>
<polygon points="1092.9,677.1 1110.2,681.7 1097.1,689.4 1079.6,684.7" fill="#3fa266"/><polygon points="1079.6,684.7 1097.1,689.4 1098.3,709.2 1081.0,704.4" fill="#45a469"/><polygon points="1097.1,689.4 1110.2,681.7 1111.3,701.3 1098.3,709.2" fill="#2f8352"/>
<polygon points="1441.3,677.5 1460.9,682.1 1451.6,689.9 1431.8,685.1" fill="#3fa266"/><polygon points="1431.8,685.1 1451.6,689.9 1450.4,709.6 1430.8,704.8" fill="#45a469"/><polygon points="1451.6,689.9 1460.9,682.1 1459.7,701.7 1450.4,709.6" fill="#2f8352"/>
<polygon points="1393.3,621.4 1398.6,622.6 1395.9,624.6 1390.5,623.4" fill="#3fa266"/><polygon points="1390.5,623.4 1395.9,624.6 1395.6,630.2 1390.3,629.0" fill="#45a469"/><polygon points="1395.9,624.6 1398.6,622.6 1398.4,628.2 1395.6,630.2" fill="#2f8352"/>
<polygon points="1341.9,553.8 1347.2,554.9 1344.2,556.6 1339.0,555.6" fill="#8ebe50"/><polygon points="1339.0,555.6 1344.2,556.6 1344.1,562.4 1338.9,561.3" fill="#98cc58"/><polygon points="1344.2,556.6 1347.2,554.9 1347.0,560.6 1344.1,562.4" fill="#78a844"/>
<polygon points="1225.7,681.5 1244.0,686.1 1232.3,694.0 1213.9,689.2" fill="#8ebe50"/><polygon points="1213.9,689.2 1232.3,694.0 1232.6,713.9 1214.3,709.0" fill="#98cc58"/><polygon points="1232.3,694.0 1244.0,686.1 1244.3,705.8 1232.6,713.9" fill="#78a844"/>
<polygon points="1176.5,625.1 1181.5,626.3 1178.1,628.3 1173.1,627.1" fill="#8ebe50"/><polygon points="1173.1,627.1 1178.1,628.3 1178.3,633.9 1173.3,632.7" fill="#98cc58"/><polygon points="1178.1,628.3 1181.5,626.3 1181.7,631.9 1178.3,633.9" fill="#78a844"/>
<polygon points="1124.8,557.1 1129.7,558.2 1126.1,560.0 1121.2,558.9" fill="#8ebe50"/><polygon points="1121.2,558.9 1126.1,560.0 1126.4,565.7 1121.5,564.6" fill="#98cc58"/><polygon points="1126.1,560.0 1129.7,558.2 1130.0,563.9 1126.4,565.7" fill="#78a844"/>
<polygon points="1528.5,625.5 1534.2,626.7 1531.8,628.7 1526.2,627.5" fill="#403a6e"/><polygon points="1526.2,627.5 1531.8,628.7 1531.3,634.3 1525.7,633.1" fill="#443c72"/><polygon points="1531.8,628.7 1534.2,626.7 1533.7,632.3 1531.3,634.3" fill="#2c2852"/>
<polygon points="1476.9,557.5 1482.4,558.6 1479.9,560.3 1474.4,559.3" fill="#403a6e"/><polygon points="1474.4,559.3 1479.9,560.3 1479.5,566.1 1474.0,565.0" fill="#443c72"/><polygon points="1479.9,560.3 1482.4,558.6 1482.1,564.3 1479.5,566.1" fill="#2c2852"/>
<polygon points="1360.2,685.9 1379.5,690.6 1369.2,698.6 1349.7,693.8" fill="#3fa266"/><polygon points="1349.7,693.8 1369.2,698.6 1368.6,718.6 1349.3,713.6" fill="#45a469"/><polygon points="1369.2,698.6 1379.5,690.6 1378.9,710.4 1368.6,718.6" fill="#2f8352"/>
<polygon points="1311.2,629.2 1316.5,630.5 1313.5,632.5 1308.2,631.3" fill="#8ebe50"/><polygon points="1308.2,631.3 1313.5,632.5 1313.4,638.1 1308.1,636.9" fill="#98cc58"/><polygon points="1313.5,632.5 1316.5,630.5 1316.4,636.1 1313.4,638.1" fill="#78a844"/>
<polygon points="1259.2,560.8 1264.4,561.9 1261.2,563.7 1256.0,562.6" fill="#3fa266"/><polygon points="1256.0,562.6 1261.2,563.7 1261.3,569.5 1256.1,568.4" fill="#45a469"/><polygon points="1261.2,563.7 1264.4,561.9 1264.4,567.7 1261.3,569.5" fill="#2f8352"/>
<polygon points="1141.6,690.0 1159.5,694.8 1146.7,702.9 1128.6,698.0" fill="#3fa266"/><polygon points="1128.6,698.0 1146.7,702.9 1147.6,722.9 1129.6,717.9" fill="#45a469"/><polygon points="1146.7,702.9 1159.5,694.8 1160.3,714.7 1147.6,722.9" fill="#2f8352"/>
<polygon points="1091.4,633.0 1096.3,634.3 1092.6,636.3 1087.7,635.1" fill="#3fa266"/><polygon points="1087.7,635.1 1092.6,636.3 1092.9,642.0 1088.0,640.7" fill="#45a469"/><polygon points="1092.6,636.3 1096.3,634.3 1096.6,639.9 1092.9,642.0" fill="#2f8352"/>
<polygon points="1496.4,690.4 1516.7,695.2 1507.8,703.3 1487.3,698.4" fill="#3fa266"/><polygon points="1487.3,698.4 1507.8,703.3 1506.3,723.3 1485.9,718.3" fill="#45a469"/><polygon points="1507.8,703.3 1516.7,695.2 1515.1,715.1 1506.3,723.3" fill="#2f8352"/>
<polygon points="1447.7,633.4 1453.2,634.6 1450.6,636.7 1445.0,635.5" fill="#403a6e"/><polygon points="1445.0,635.5 1450.6,636.7 1450.3,642.4 1444.7,641.1" fill="#443c72"/><polygon points="1450.6,636.7 1453.2,634.6 1452.9,640.3 1450.3,642.4" fill="#2c2852"/>
<polygon points="1395.4,564.6 1400.8,565.7 1398.0,567.5 1392.6,566.4" fill="#3fa266"/><polygon points="1392.6,566.4 1398.0,567.5 1397.8,573.3 1392.4,572.2" fill="#45a469"/><polygon points="1398.0,567.5 1400.8,565.7 1400.6,571.5 1397.8,573.3" fill="#2f8352"/>
<polygon points="1277.2,694.6 1296.1,699.4 1284.7,707.6 1265.6,702.6" fill="#8ebe50"/><polygon points="1265.6,702.6 1284.7,707.6 1284.7,727.7 1265.7,722.7" fill="#98cc58"/><polygon points="1284.7,707.6 1296.1,699.4 1296.0,719.4 1284.7,727.7" fill="#78a844"/>
<polygon points="1227.2,637.3 1232.4,638.5 1229.1,640.6 1223.9,639.3" fill="#8ebe50"/><polygon points="1223.9,639.3 1229.1,640.6 1229.2,646.3 1224.0,645.0" fill="#98cc58"/><polygon points="1229.1,640.6 1232.4,638.5 1232.5,644.2 1229.2,646.3" fill="#78a844"/>
<polygon points="1174.6,568.0 1179.7,569.1 1176.2,571.0 1171.1,569.8" fill="#8ebe50"/><polygon points="1171.1,569.8 1176.2,571.0 1176.4,576.8 1171.3,575.7" fill="#98cc58"/><polygon points="1176.2,571.0 1179.7,569.1 1179.9,574.9 1176.4,576.8" fill="#78a844"/>
<polygon points="1533.2,568.4 1539.0,569.5 1536.6,571.3 1530.8,570.2" fill="#545cb2"/><polygon points="1530.8,570.2 1536.6,571.3 1536.1,577.2 1530.3,576.0" fill="#5860b8"/><polygon points="1536.6,571.3 1539.0,569.5 1538.5,575.3 1536.1,577.2" fill="#3f4590"/>
<polygon points="1055.4,698.8 1073.0,703.7 1059.0,712.0 1041.3,706.9" fill="#3fa266"/><polygon points="1041.3,706.9 1059.0,712.0 1060.5,732.2 1042.9,727.1" fill="#45a469"/><polygon points="1059.0,712.0 1073.0,703.7 1074.4,723.7 1060.5,732.2" fill="#2f8352"/>
<polygon points="1414.5,699.2 1434.5,704.1 1424.5,712.4 1404.4,707.4" fill="#3fa266"/><polygon points="1404.4,707.4 1424.5,712.4 1423.6,732.6 1403.5,727.5" fill="#45a469"/><polygon points="1424.5,712.4 1434.5,704.1 1433.4,724.2 1423.6,732.6" fill="#2f8352"/>
<polygon points="1364.8,641.5 1370.3,642.8 1367.3,644.9 1361.9,643.6" fill="#3fa266"/><polygon points="1361.9,643.6 1367.3,644.9 1367.2,650.6 1361.7,649.3" fill="#45a469"/><polygon points="1367.3,644.9 1370.3,642.8 1370.1,648.5 1367.2,650.6" fill="#2f8352"/>
<polygon points="1311.8,571.9 1317.2,573.0 1314.1,574.9 1308.7,573.7" fill="#8ebe50"/><polygon points="1308.7,573.7 1314.1,574.9 1314.1,580.7 1308.7,579.6" fill="#98cc58"/><polygon points="1314.1,574.9 1317.2,573.0 1317.1,578.8 1314.1,580.7" fill="#78a844"/>
<polygon points="1192.1,703.5 1210.7,708.4 1198.2,716.8 1179.4,711.7" fill="#3fa266"/><polygon points="1179.4,711.7 1198.2,716.8 1198.7,737.1 1180.1,731.9" fill="#45a469"/><polygon points="1198.2,716.8 1210.7,708.4 1211.2,728.6 1198.7,737.1" fill="#2f8352"/>
<polygon points="1141.2,645.5 1146.2,646.7 1142.6,648.8 1137.5,647.6" fill="#3fa266"/><polygon points="1137.5,647.6 1142.6,648.8 1142.9,654.6 1137.8,653.3" fill="#45a469"/><polygon points="1142.6,648.8 1146.2,646.7 1146.5,652.5 1142.9,654.6" fill="#2f8352"/>
<polygon points="1087.8,575.4 1092.8,576.5 1089.0,578.4 1084.0,577.3" fill="#3fa266"/><polygon points="1084.0,577.3 1089.0,578.4 1089.4,584.3 1084.4,583.1" fill="#45a469"/><polygon points="1089.0,578.4 1092.8,576.5 1093.2,582.4 1089.4,584.3" fill="#2f8352"/>
<polygon points="1504.1,645.9 1509.9,647.1 1507.3,649.3 1501.6,648.0" fill="#403a6e"/><polygon points="1501.6,648.0 1507.3,649.3 1506.9,655.0 1501.1,653.7" fill="#443c72"/><polygon points="1507.3,649.3 1509.9,647.1 1509.4,652.9 1506.9,655.0" fill="#2c2852"/>
<polygon points="1450.9,575.7 1456.5,576.9 1453.8,578.8 1448.2,577.6" fill="#403a6e"/><polygon points="1448.2,577.6 1453.8,578.8 1453.5,584.7 1447.8,583.5" fill="#443c72"/><polygon points="1453.8,578.8 1456.5,576.9 1456.2,582.8 1453.5,584.7" fill="#2c2852"/>
<polygon points="1330.5,708.2 1350.2,713.2 1339.2,721.7 1319.4,716.6" fill="#8ebe50"/><polygon points="1319.4,716.6 1339.2,721.7 1338.8,742.1 1319.1,736.9" fill="#98cc58"/><polygon points="1339.2,721.7 1350.2,713.2 1349.7,733.5 1338.8,742.1" fill="#78a844"/>
<polygon points="1279.9,649.9 1285.2,651.1 1282.0,653.3 1276.6,652.0" fill="#8ebe50"/><polygon points="1276.6,652.0 1282.0,653.3 1282.0,659.1 1276.6,657.8" fill="#98cc58"/><polygon points="1282.0,653.3 1285.2,651.1 1285.2,656.9 1282.0,659.1" fill="#78a844"/>
<polygon points="1226.2,579.3 1231.5,580.5 1228.1,582.4 1222.8,581.2" fill="#8ebe50"/><polygon points="1222.8,581.2 1228.1,582.4 1228.2,588.3 1222.9,587.1" fill="#98cc58"/><polygon points="1228.1,582.4 1231.5,580.5 1231.6,586.4 1228.2,588.3" fill="#78a844"/>
<polygon points="1104.8,712.6 1123.1,717.7 1109.4,726.2 1091.1,721.0" fill="#3fa266"/><polygon points="1091.1,721.0 1109.4,726.2 1110.6,746.7 1092.4,741.4" fill="#45a469"/><polygon points="1109.4,726.2 1123.1,717.7 1124.2,738.0 1110.6,746.7" fill="#2f8352"/>
<polygon points="1052.9,653.9 1057.9,655.2 1053.9,657.3 1048.9,656.0" fill="#403a6e"/><polygon points="1048.9,656.0 1053.9,657.3 1054.4,663.2 1049.4,661.8" fill="#443c72"/><polygon points="1053.9,657.3 1057.9,655.2 1058.3,661.0 1054.4,663.2" fill="#2c2852"/>
<polygon points="1470.7,713.0 1491.5,718.1 1482.0,726.7 1461.1,721.5" fill="#3fa266"/><polygon points="1461.1,721.5 1482.0,726.7 1480.6,747.2 1459.8,741.9" fill="#45a469"/><polygon points="1482.0,726.7 1491.5,718.1 1490.0,738.4 1480.6,747.2" fill="#2f8352"/>
<polygon points="1420.4,654.3 1426.0,655.6 1423.2,657.8 1417.5,656.5" fill="#3fa266"/><polygon points="1417.5,656.5 1423.2,657.8 1423.0,663.6 1417.3,662.3" fill="#45a469"/><polygon points="1423.2,657.8 1426.0,655.6 1425.8,661.4 1423.0,663.6" fill="#2f8352"/>
<polygon points="1366.4,583.3 1372.0,584.5 1369.0,586.4 1363.4,585.2" fill="#3fa266"/><polygon points="1363.4,585.2 1369.0,586.4 1368.9,592.4 1363.3,591.2" fill="#45a469"/><polygon points="1369.0,586.4 1372.0,584.5 1371.8,590.4 1368.9,592.4" fill="#2f8352"/>
<polygon points="1244.5,717.4 1263.8,722.6 1251.7,731.3 1232.2,726.0" fill="#8ebe50"/><polygon points="1232.2,726.0 1251.7,731.3 1251.9,751.9 1232.5,746.5" fill="#98cc58"/><polygon points="1251.7,731.3 1263.8,722.6 1263.9,743.0 1251.9,751.9" fill="#78a844"/>
<polygon points="1192.8,658.4 1198.1,659.7 1194.5,661.9 1189.3,660.6" fill="#3fa266"/><polygon points="1189.3,660.6 1194.5,661.9 1194.7,667.7 1189.4,666.4" fill="#45a469"/><polygon points="1194.5,661.9 1198.1,659.7 1198.3,665.5 1194.7,667.7" fill="#2f8352"/>
<polygon points="1138.5,586.9 1143.7,588.1 1139.9,590.1 1134.8,588.9" fill="#3fa266"/><polygon points="1134.8,588.9 1139.9,590.1 1140.2,596.1 1135.0,594.9" fill="#45a469"/><polygon points="1139.9,590.1 1143.7,588.1 1143.9,594.1 1140.2,596.1" fill="#2f8352"/>
<polygon points="1508.4,587.3 1514.3,588.5 1511.8,590.5 1505.9,589.3" fill="#403a6e"/><polygon points="1505.9,589.3 1511.8,590.5 1511.3,596.5 1505.4,595.3" fill="#443c72"/><polygon points="1511.8,590.5 1514.3,588.5 1513.9,594.5 1511.3,596.5" fill="#2c2852"/>
<polygon points="1015.4,721.9 1033.3,727.1 1018.4,735.9 1000.4,730.6" fill="#3fa266"/><polygon points="1000.4,730.6 1018.4,735.9 1020.3,756.6 1002.4,751.2" fill="#45a469"/><polygon points="1018.4,735.9 1033.3,727.1 1035.0,747.6 1020.3,756.6" fill="#2f8352"/>
<polygon points="1385.9,722.3 1406.3,727.6 1395.8,736.4 1375.2,731.0" fill="#8ebe50"/><polygon points="1375.2,731.0 1395.8,736.4 1395.0,757.1 1374.5,751.6" fill="#98cc58"/><polygon points="1395.8,736.4 1406.3,727.6 1405.5,748.1 1395.0,757.1" fill="#78a844"/>
<polygon points="1334.5,662.9 1340.1,664.3 1337.0,666.5 1331.4,665.1" fill="#8ebe50"/><polygon points="1331.4,665.1 1337.0,666.5 1336.9,672.4 1331.3,671.0" fill="#98cc58"/><polygon points="1337.0,666.5 1340.1,664.3 1340.0,670.1 1336.9,672.4" fill="#78a844"/>
<polygon points="1279.9,591.0 1285.4,592.2 1282.1,594.2 1276.6,593.0" fill="#8ebe50"/><polygon points="1276.6,593.0 1282.1,594.2 1282.1,600.2 1276.6,599.0" fill="#98cc58"/><polygon points="1282.1,594.2 1285.4,592.2 1285.3,598.2 1282.1,600.2" fill="#78a844"/>
<polygon points="1156.2,726.9 1175.2,732.2 1161.9,741.1 1142.8,735.7" fill="#3fa266"/><polygon points="1142.8,735.7 1161.9,741.1 1162.7,761.9 1143.7,756.4" fill="#45a469"/><polygon points="1161.9,741.1 1175.2,732.2 1176.0,752.8 1162.7,761.9" fill="#2f8352"/>
<polygon points="1103.5,667.1 1108.7,668.5 1104.8,670.7 1099.7,669.4" fill="#403a6e"/><polygon points="1099.7,669.4 1104.8,670.7 1105.2,676.6 1100.0,675.2" fill="#443c72"/><polygon points="1104.8,670.7 1108.7,668.5 1109.0,674.4 1105.2,676.6" fill="#2c2852"/>
<polygon points="1048.5,594.8 1053.6,596.0 1049.5,598.0 1044.4,596.8" fill="#403a6e"/><polygon points="1044.4,596.8 1049.5,598.0 1049.9,604.0 1044.9,602.8" fill="#443c72"/><polygon points="1049.5,598.0 1053.6,596.0 1054.0,602.0 1049.9,604.0" fill="#2c2852"/>
<polygon points="1478.1,667.5 1484.0,668.9 1481.3,671.1 1475.4,669.8" fill="#3fa266"/><polygon points="1475.4,669.8 1481.3,671.1 1480.9,677.0 1475.0,675.7" fill="#45a469"/><polygon points="1481.3,671.1 1484.0,668.9 1483.6,674.8 1480.9,677.0" fill="#2f8352"/>
<polygon points="1423.1,595.2 1428.9,596.4 1426.1,598.4 1420.3,597.2" fill="#3fa266"/><polygon points="1420.3,597.2 1426.1,598.4 1425.8,604.5 1420.0,603.2" fill="#45a469"/><polygon points="1426.1,598.4 1428.9,596.4 1428.6,602.4 1425.8,604.5" fill="#2f8352"/>
<polygon points="1298.9,731.9 1319.0,737.3 1307.3,746.3 1287.0,740.8" fill="#3fa266"/><polygon points="1287.0,740.8 1307.3,746.3 1307.1,767.2 1287.0,761.6" fill="#45a469"/><polygon points="1307.3,746.3 1319.0,737.3 1318.7,758.0 1307.1,767.2" fill="#2f8352"/>
<polygon points="1246.5,671.8 1252.0,673.2 1248.5,675.4 1243.0,674.1" fill="#8ebe50"/><polygon points="1243.0,674.1 1248.5,675.4 1248.6,681.4 1243.1,680.0" fill="#98cc58"/><polygon points="1248.5,675.4 1252.0,673.2 1252.0,679.1 1248.6,681.4" fill="#78a844"/>
<polygon points="1191.1,599.0 1196.5,600.2 1192.9,602.2 1187.5,601.0" fill="#3fa266"/><polygon points="1187.5,601.0 1192.9,602.2 1193.0,608.3 1187.7,607.1" fill="#45a469"/><polygon points="1192.9,602.2 1196.5,600.2 1196.7,606.3 1193.0,608.3" fill="#2f8352"/>
<polygon points="1065.7,736.6 1084.3,742.0 1069.8,751.1 1051.0,745.6" fill="#3fa266"/><polygon points="1051.0,745.6 1069.8,751.1 1071.3,772.1 1052.7,766.5" fill="#45a469"/><polygon points="1069.8,751.1 1084.3,742.0 1085.7,762.8 1071.3,772.1" fill="#2f8352"/>
<polygon points="1012.0,676.1 1017.0,677.5 1012.8,679.8 1007.7,678.4" fill="#403a6e"/><polygon points="1007.7,678.4 1012.8,679.8 1013.3,685.7 1008.3,684.3" fill="#443c72"/><polygon points="1012.8,679.8 1017.0,677.5 1017.5,683.4 1013.3,685.7" fill="#2c2852"/>
<polygon points="1443.4,737.0 1464.7,742.4 1454.6,751.6 1433.2,746.0" fill="#8ebe50"/><polygon points="1433.2,746.0 1454.6,751.6 1453.3,772.6 1432.1,766.9" fill="#98cc58"/><polygon points="1454.6,751.6 1464.7,742.4 1463.4,763.3 1453.3,772.6" fill="#78a844"/>
<polygon points="1391.3,676.5 1397.1,677.9 1394.1,680.2 1388.3,678.8" fill="#8ebe50"/><polygon points="1388.3,678.8 1394.1,680.2 1393.9,686.2 1388.1,684.8" fill="#98cc58"/><polygon points="1394.1,680.2 1397.1,677.9 1396.9,683.8 1393.9,686.2" fill="#78a844"/>
<polygon points="1335.6,603.2 1341.3,604.5 1338.1,606.5 1332.4,605.3" fill="#8ebe50"/><polygon points="1332.4,605.3 1338.1,606.5 1338.0,612.6 1332.3,611.4" fill="#98cc58"/><polygon points="1338.1,606.5 1341.3,604.5 1341.2,610.6 1338.0,612.6" fill="#78a844"/>
<polygon points="1209.6,741.7 1229.4,747.2 1216.4,756.5 1196.5,750.9" fill="#8ebe50"/><polygon points="1196.5,750.9 1216.4,756.5 1216.9,777.6 1197.1,771.9" fill="#98cc58"/><polygon points="1216.4,756.5 1229.4,747.2 1229.7,768.1 1216.9,777.6" fill="#78a844"/>
<polygon points="1156.2,680.9 1161.5,682.3 1157.7,684.6 1152.4,683.2" fill="#3fa266"/><polygon points="1152.4,683.2 1157.7,684.6 1158.0,690.6 1152.6,689.2" fill="#45a469"/><polygon points="1157.7,684.6 1161.5,682.3 1161.8,688.2 1158.0,690.6" fill="#2f8352"/>
<polygon points="1100.0,607.1 1105.3,608.4 1101.3,610.5 1096.1,609.2" fill="#403a6e"/><polygon points="1096.1,609.2 1101.3,610.5 1101.7,616.6 1096.4,615.3" fill="#443c72"/><polygon points="1101.3,610.5 1105.3,608.4 1105.6,614.5 1101.7,616.6" fill="#2c2852"/>
<polygon points="1482.1,607.5 1488.1,608.8 1485.4,610.9 1479.3,609.6" fill="#3fa266"/><polygon points="1479.3,609.6 1485.4,610.9 1484.9,617.0 1478.9,615.7" fill="#45a469"/><polygon points="1485.4,610.9 1488.1,608.8 1487.7,614.9 1484.9,617.0" fill="#2f8352"/>
<polygon points="1355.5,747.0 1376.4,752.5 1365.1,761.9 1344.0,756.2" fill="#3fa266"/><polygon points="1344.0,756.2 1365.1,761.9 1364.5,783.1 1343.5,777.3" fill="#45a469"/><polygon points="1365.1,761.9 1376.4,752.5 1375.7,773.6 1364.5,783.1" fill="#2f8352"/>
<polygon points="1302.3,685.7 1308.0,687.2 1304.6,689.5 1298.9,688.1" fill="#3fa266"/><polygon points="1298.9,688.1 1304.6,689.5 1304.6,695.5 1298.9,694.1" fill="#45a469"/><polygon points="1304.6,689.5 1308.0,687.2 1307.9,693.2 1304.6,695.5" fill="#2f8352"/>
<polygon points="1245.8,611.5 1251.4,612.8 1247.9,614.9 1242.3,613.6" fill="#8ebe50"/><polygon points="1242.3,613.6 1247.9,614.9 1248.0,621.0 1242.4,619.8" fill="#98cc58"/><polygon points="1247.9,614.9 1251.4,612.8 1251.5,618.9 1248.0,621.0" fill="#78a844"/>
<polygon points="1118.1,751.8 1137.4,757.5 1123.2,767.0 1103.7,761.2" fill="#3fa266"/><polygon points="1103.7,761.2 1123.2,767.0 1124.3,788.3 1105.0,782.4" fill="#45a469"/><polygon points="1123.2,767.0 1137.4,757.5 1138.4,778.6 1124.3,788.3" fill="#2f8352"/>
<polygon points="1063.4,690.2 1068.7,691.6 1064.6,694.0 1059.3,692.6" fill="#403a6e"/><polygon points="1059.3,692.6 1064.6,694.0 1065.0,700.1 1059.7,698.6" fill="#443c72"/><polygon points="1064.6,694.0 1068.7,691.6 1069.1,697.7 1065.0,700.1" fill="#2c2852"/>
<polygon points="1006.6,615.5 1011.7,616.8 1007.4,618.9 1002.2,617.6" fill="#545cb2"/><polygon points="1002.2,617.6 1007.4,618.9 1007.9,625.1 1002.8,623.8" fill="#5860b8"/><polygon points="1007.4,618.9 1011.7,616.8 1012.2,623.0 1007.9,625.1" fill="#3f4590"/>
<polygon points="1450.4,690.6 1456.4,692.1 1453.5,694.5 1447.5,693.0" fill="#8ebe50"/><polygon points="1447.5,693.0 1453.5,694.5 1453.2,700.5 1447.1,699.1" fill="#98cc58"/><polygon points="1453.5,694.5 1456.4,692.1 1456.0,698.1 1453.2,700.5" fill="#78a844"/>
<polygon points="1393.6,615.9 1399.5,617.2 1396.4,619.3 1390.5,618.0" fill="#8ebe50"/><polygon points="1390.5,618.0 1396.4,619.3 1396.2,625.5 1390.3,624.2" fill="#98cc58"/><polygon points="1396.4,619.3 1399.5,617.2 1399.3,623.4 1396.2,625.5" fill="#78a844"/>
<polygon points="1265.2,757.2 1285.7,762.9 1273.2,772.6 1252.5,766.7" fill="#3fa266"/><polygon points="1252.5,766.7 1273.2,772.6 1273.2,794.0 1252.7,788.0" fill="#45a469"/><polygon points="1273.2,772.6 1285.7,762.9 1285.7,784.1 1273.2,794.0" fill="#2f8352"/>
<polygon points="1210.9,695.2 1216.5,696.6 1212.8,699.1 1207.2,697.6" fill="#8ebe50"/><polygon points="1207.2,697.6 1212.8,699.1 1212.9,705.2 1207.3,703.7" fill="#98cc58"/><polygon points="1212.8,699.1 1216.5,696.6 1216.6,702.7 1212.9,705.2" fill="#78a844"/>
<polygon points="1153.6,620.0 1159.1,621.3 1155.2,623.4 1149.8,622.1" fill="#3fa266"/><polygon points="1149.8,622.1 1155.2,623.4 1155.5,629.7 1150.0,628.3" fill="#45a469"/><polygon points="1155.2,623.4 1159.1,621.3 1159.4,627.5 1155.5,629.7" fill="#2f8352"/>
<polygon points="1414.3,762.6 1436.1,768.4 1425.3,778.2 1403.3,772.3" fill="#3fa266"/><polygon points="1403.3,772.3 1425.3,778.2 1424.2,799.7 1402.4,793.7" fill="#45a469"/><polygon points="1425.3,778.2 1436.1,768.4 1434.9,789.8 1424.2,799.7" fill="#2f8352"/>
<polygon points="1360.3,700.2 1366.2,701.7 1363.0,704.2 1357.1,702.7" fill="#3fa266"/><polygon points="1357.1,702.7 1363.0,704.2 1362.9,710.3 1356.9,708.8" fill="#45a469"/><polygon points="1363.0,704.2 1366.2,701.7 1366.1,707.8 1362.9,710.3" fill="#2f8352"/>
<polygon points="1302.7,624.5 1308.6,625.8 1305.2,628.0 1299.3,626.7" fill="#3fa266"/><polygon points="1299.3,626.7 1305.2,628.0 1305.1,634.3 1299.3,632.9" fill="#45a469"/><polygon points="1305.2,628.0 1308.6,625.8 1308.5,632.1 1305.1,634.3" fill="#2f8352"/>
<polygon points="1172.5,767.7 1192.6,773.5 1178.8,783.5 1158.5,777.5" fill="#8ebe50"/><polygon points="1158.5,777.5 1178.8,783.5 1179.5,805.1 1159.4,799.0" fill="#98cc58"/><polygon points="1178.8,783.5 1192.6,773.5 1193.3,795.0 1179.5,805.1" fill="#78a844"/>
<polygon points="1117.0,704.9 1122.5,706.4 1118.4,708.9 1113.0,707.4" fill="#3fa266"/><polygon points="1113.0,707.4 1118.4,708.9 1118.8,715.0 1113.3,713.5" fill="#45a469"/><polygon points="1118.4,708.9 1122.5,706.4 1122.8,712.5 1118.8,715.0" fill="#2f8352"/>
<polygon points="1059.0,628.7 1064.3,630.0 1060.1,632.2 1054.7,630.9" fill="#403a6e"/><polygon points="1054.7,630.9 1060.1,632.2 1060.6,638.5 1055.2,637.2" fill="#443c72"/><polygon points="1060.1,632.2 1064.3,630.0 1064.8,636.3 1060.6,638.5" fill="#2c2852"/>
<polygon points="1453.9,629.1 1460.1,630.4 1457.1,632.7 1451.0,631.3" fill="#8ebe50"/><polygon points="1451.0,631.3 1457.1,632.7 1456.8,639.0 1450.6,637.6" fill="#98cc58"/><polygon points="1457.1,632.7 1460.1,630.4 1459.7,636.7 1456.8,639.0" fill="#78a844"/>
<polygon points="1323.0,773.3 1344.4,779.2 1332.3,789.3 1310.7,783.2" fill="#3fa266"/><polygon points="1310.7,783.2 1332.3,789.3 1331.9,811.0 1310.5,804.8" fill="#45a469"/><polygon points="1332.3,789.3 1344.4,779.2 1343.9,800.8 1331.9,811.0" fill="#2f8352"/>
<polygon points="1267.8,710.1 1273.6,711.6 1270.1,714.1 1264.2,712.6" fill="#3fa266"/><polygon points="1264.2,712.6 1270.1,714.1 1270.1,720.3 1264.3,718.8" fill="#45a469"/><polygon points="1270.1,714.1 1273.6,711.6 1273.7,717.8 1270.1,720.3" fill="#2f8352"/>
<polygon points="1209.4,633.3 1215.1,634.7 1211.4,637.0 1205.7,635.6" fill="#8ebe50"/><polygon points="1205.7,635.6 1211.4,637.0 1211.5,643.3 1205.8,641.9" fill="#98cc58"/><polygon points="1211.4,637.0 1215.1,634.7 1215.3,641.0 1211.5,643.3" fill="#78a844"/>
<polygon points="1420.7,715.3 1426.9,716.9 1423.9,719.5 1417.7,717.9" fill="#3fa266"/><polygon points="1417.7,717.9 1423.9,719.5 1423.6,725.7 1417.4,724.1" fill="#45a469"/><polygon points="1423.9,719.5 1426.9,716.9 1426.6,723.1 1423.6,725.7" fill="#2f8352"/>
<polygon points="1362.0,638.0 1368.1,639.4 1364.8,641.7 1358.7,640.3" fill="#3fa266"/><polygon points="1358.7,640.3 1364.8,641.7 1364.6,648.1 1358.6,646.7" fill="#45a469"/><polygon points="1364.8,641.7 1368.1,639.4 1367.9,645.8 1364.6,648.1" fill="#2f8352"/>
<polygon points="1229.1,784.2 1250.1,790.3 1236.7,800.7 1215.6,794.4" fill="#3fa266"/><polygon points="1215.6,794.4 1236.7,800.7 1237.0,822.6 1216.0,816.2" fill="#45a469"/><polygon points="1236.7,800.7 1250.1,790.3 1250.3,812.1 1237.0,822.6" fill="#2f8352"/>
<polygon points="1172.8,720.2 1178.5,721.8 1174.6,724.4 1168.8,722.8" fill="#8ebe50"/><polygon points="1168.8,722.8 1174.6,724.4 1174.8,730.6 1169.1,729.0" fill="#98cc58"/><polygon points="1174.6,724.4 1178.5,721.8 1178.7,728.0 1174.8,730.6" fill="#78a844"/>
<polygon points="1113.6,642.4 1119.2,643.8 1115.0,646.1 1109.4,644.7" fill="#3fa266"/><polygon points="1109.4,644.7 1115.0,646.1 1115.4,652.5 1109.8,651.1" fill="#45a469"/><polygon points="1115.0,646.1 1119.2,643.8 1119.5,650.2 1115.4,652.5" fill="#2f8352"/>
<polygon points="1383.2,790.0 1405.4,796.2 1393.9,806.7 1371.4,800.4" fill="#3fa266"/><polygon points="1371.4,800.4 1393.9,806.7 1393.0,828.8 1370.7,822.3" fill="#45a469"/><polygon points="1393.9,806.7 1405.4,796.2 1404.5,818.1 1393.0,828.8" fill="#2f8352"/>
<polygon points="1327.2,725.6 1333.2,727.2 1329.8,729.8 1323.7,728.2" fill="#403a6e"/><polygon points="1323.7,728.2 1329.8,729.8 1329.7,736.1 1323.6,734.5" fill="#443c72"/><polygon points="1329.8,729.8 1333.2,727.2 1333.1,733.4 1329.7,736.1" fill="#2c2852"/>
<polygon points="1267.6,647.2 1273.5,648.7 1269.9,651.0 1263.9,649.6" fill="#3fa266"/><polygon points="1263.9,649.6 1269.9,651.0 1269.9,657.5 1264.0,656.0" fill="#45a469"/><polygon points="1269.9,651.0 1273.5,648.7 1273.5,655.1 1269.9,657.5" fill="#2f8352"/>
<polygon points="1423.8,652.1 1430.1,653.6 1427.0,656.0 1420.6,654.5" fill="#3fa266"/><polygon points="1420.6,654.5 1427.0,656.0 1426.6,662.5 1420.3,661.0" fill="#45a469"/><polygon points="1427.0,656.0 1430.1,653.6 1429.7,660.0 1426.6,662.5" fill="#2f8352"/>
<polygon points="1288.2,801.4 1310.1,807.8 1297.1,818.6 1275.1,812.0" fill="#3fa266"/><polygon points="1275.1,812.0 1297.1,818.6 1297.0,840.8 1275.1,834.2" fill="#45a469"/><polygon points="1297.1,818.6 1310.1,807.8 1309.8,829.9 1297.0,840.8" fill="#2f8352"/>
<polygon points="1230.9,736.1 1236.9,737.8 1233.1,740.5 1227.1,738.8" fill="#3fa266"/><polygon points="1227.1,738.8 1233.1,740.5 1233.2,746.8 1227.2,745.2" fill="#45a469"/><polygon points="1233.1,740.5 1236.9,737.8 1237.0,744.1 1233.2,746.8" fill="#2f8352"/>
<polygon points="1170.5,656.7 1176.3,658.1 1172.3,660.6 1166.5,659.1" fill="#8ebe50"/><polygon points="1166.5,659.1 1172.3,660.6 1172.5,667.1 1166.7,665.6" fill="#98cc58"/><polygon points="1172.3,660.6 1176.3,658.1 1176.5,664.6 1172.5,667.1" fill="#78a844"/>
<polygon points="1389.0,741.8 1395.3,743.4 1392.1,746.2 1385.7,744.5" fill="#403a6e"/><polygon points="1385.7,744.5 1392.1,746.2 1391.8,752.5 1385.5,750.9" fill="#443c72"/><polygon points="1392.1,746.2 1395.3,743.4 1395.1,749.8 1391.8,752.5" fill="#2c2852"/>
<polygon points="1328.2,661.7 1334.4,663.2 1330.9,665.7 1324.7,664.2" fill="#403a6e"/><polygon points="1324.7,664.2 1330.9,665.7 1330.8,672.2 1324.6,670.7" fill="#443c72"/><polygon points="1330.9,665.7 1334.4,663.2 1334.3,669.7 1330.8,672.2" fill="#2c2852"/>
<polygon points="1349.8,819.4 1372.6,826.0 1360.2,837.3 1337.2,830.5" fill="#3fa266"/><polygon points="1337.2,830.5 1360.2,837.3 1359.6,859.9 1336.7,852.9" fill="#45a469"/><polygon points="1360.2,837.3 1372.6,826.0 1371.9,848.4 1359.6,859.9" fill="#2f8352"/>
<polygon points="1291.6,752.8 1297.8,754.5 1294.1,757.3 1287.9,755.6" fill="#403a6e"/><polygon points="1287.9,755.6 1294.1,757.3 1294.1,763.7 1287.9,762.0" fill="#443c72"/><polygon points="1294.1,757.3 1297.8,754.5 1297.8,760.9 1294.1,763.7" fill="#2c2852"/>
<polygon points="1229.9,671.6 1236.0,673.1 1232.1,675.7 1226.0,674.1" fill="#3fa266"/><polygon points="1226.0,674.1 1232.1,675.7 1232.2,682.3 1226.1,680.7" fill="#45a469"/><polygon points="1232.1,675.7 1236.0,673.1 1236.1,679.7 1232.2,682.3" fill="#2f8352"/>
<polygon points="1391.4,676.9 1397.9,678.4 1394.6,681.0 1388.1,679.5" fill="#403a6e"/><polygon points="1388.1,679.5 1394.6,681.0 1394.3,687.7 1387.8,686.1" fill="#443c72"/><polygon points="1394.6,681.0 1397.9,678.4 1397.6,685.1 1394.3,687.7" fill="#2c2852"/>
<polygon points="1355.0,770.1 1361.4,771.9 1357.9,774.9 1351.4,773.1" fill="#403a6e"/><polygon points="1351.4,773.1 1357.9,774.9 1357.7,781.4 1351.3,779.6" fill="#443c72"/><polygon points="1357.9,774.9 1361.4,771.9 1361.3,778.4 1357.7,781.4" fill="#2c2852"/>
<polygon points="1291.9,687.2 1298.2,688.8 1294.5,691.4 1288.1,689.8" fill="#403a6e"/><polygon points="1288.1,689.8 1294.5,691.4 1294.4,698.2 1288.1,696.5" fill="#443c72"/><polygon points="1294.5,691.4 1298.2,688.8 1298.2,695.5 1294.4,698.2" fill="#2c2852"/>
<polygon points="1356.7,703.5 1363.3,705.1 1359.7,707.9 1353.1,706.2" fill="#545cb2"/><polygon points="1353.1,706.2 1359.7,707.9 1359.5,714.8 1352.9,713.1" fill="#5860b8"/><polygon points="1359.7,707.9 1363.3,705.1 1363.1,712.0 1359.5,714.8" fill="#3f4590"/>
<path d="M1215.8,474.1L956.2,593.2M1215.8,474.1L1577.9,539.9M1374.9,696.8L956.2,593.2M1374.9,696.8L1577.9,539.9M956.2,593.2L996.9,981.4M1374.9,696.8L1361.2,1125.1M1577.9,539.9L1543.2,904.9M996.9,981.4L1361.2,1125.1M1543.2,904.9L1361.2,1125.1" stroke="#ffffff" stroke-width="3.6" fill="none" stroke-linecap="round"/>
<rect x="1278" y="534" width="6" height="206" fill="#00ff00"/><circle cx="1281" cy="596" r="9" fill="#00ff00"/><circle cx="1281" cy="654.5" r="9" fill="#00ff00"/><path d="M1281 672L1263 708Q1261 716 1270 718H1292Q1302 716 1300 708Z" fill="#00ff00"/>
<path d="M1595,568.3L1562.7,879" stroke="#28c048" stroke-width="1.3"/>
<circle cx="1595" cy="568.3" r="2.2" fill="#28c048"/>
<text x="1603" y="575.9" fill="#30d048" font-size="15" font-weight="bold" font-family="Liberation Sans" textLength="15.4" lengthAdjust="spacingAndGlyphs">+3</text>
<circle cx="1590" cy="620" r="2.2" fill="#28c048"/>
<text x="1598" y="627.6" fill="#30d048" font-size="15" font-weight="bold" font-family="Liberation Sans" textLength="15.4" lengthAdjust="spacingAndGlyphs">+2</text>
<circle cx="1584" cy="672.3" r="2.2" fill="#28c048"/>
<text x="1592" y="679.9" fill="#30d048" font-size="15" font-weight="bold" font-family="Liberation Sans" textLength="15.4" lengthAdjust="spacingAndGlyphs">+1</text>
<circle cx="1579" cy="723.5" r="2.2" fill="#28c048"/>
<text x="1587" y="731.1" fill="#30d048" font-size="15" font-weight="bold" font-family="Liberation Sans" textLength="7.7" lengthAdjust="spacingAndGlyphs">0</text>
<circle cx="1573.3" cy="775.7" r="2.2" fill="#28c048"/>
<text x="1581.3" y="783.3000000000001" fill="#30d048" font-size="15" font-weight="bold" font-family="Liberation Sans" textLength="15.4" lengthAdjust="spacingAndGlyphs">-1</text>
<circle cx="1568.3" cy="827.3" r="2.2" fill="#28c048"/>
<text x="1576.3" y="834.9" fill="#30d048" font-size="15" font-weight="bold" font-family="Liberation Sans" textLength="15.4" lengthAdjust="spacingAndGlyphs">-2</text>
<circle cx="1562.7" cy="879" r="2.2" fill="#28c048"/>
<text x="1570.7" y="886.6" fill="#30d048" font-size="15" font-weight="bold" font-family="Liberation Sans" textLength="15.4" lengthAdjust="spacingAndGlyphs">-3</text>
<text x="1610" y="728" fill="#30d048" font-size="15" font-weight="bold" font-family="Liberation Sans">Y</text>
<path d="M1544,933.4L1433,1072" stroke="#20b8f0" stroke-width="1.3"/>
<circle cx="1544" cy="933.4" r="2.3" fill="#20b8f0"/>
<text x="1544" y="958.4" fill="#20b8f0" font-size="15" font-weight="bold" font-family="Liberation Sans" text-anchor="middle" transform="translate(4,0)">-3</text>
<circle cx="1518.5" cy="964.8" r="2.3" fill="#20b8f0"/>
<text x="1518.5" y="989.8" fill="#20b8f0" font-size="15" font-weight="bold" font-family="Liberation Sans" text-anchor="middle" transform="translate(4,0)">-2</text>
<circle cx="1492.8" cy="997.1" r="2.3" fill="#20b8f0"/>
<text x="1492.8" y="1022.1" fill="#20b8f0" font-size="15" font-weight="bold" font-family="Liberation Sans" text-anchor="middle" transform="translate(4,0)">-1</text>
<circle cx="1467.7" cy="1029" r="2.3" fill="#20b8f0"/>
<text x="1467.7" y="1054" fill="#20b8f0" font-size="15" font-weight="bold" font-family="Liberation Sans" text-anchor="middle" transform="translate(4,0)">0</text>
<circle cx="1441.7" cy="1060.8" r="2.3" fill="#20b8f0"/>
<text x="1485" y="1073.5" fill="#20b8f0" font-size="15" font-weight="bold" font-family="Liberation Sans" text-anchor="middle">Z</text>
<path d="M1011.8,1009.8L1160,1070.5" stroke="#e85820" stroke-width="1.3"/>
<circle cx="1011.8" cy="1009.8" r="2.3" fill="#e85820"/>
<text x="1008.3" y="1036.3" fill="#e85820" font-size="15" font-weight="bold" font-family="Liberation Sans" text-anchor="middle">-3</text>
<circle cx="1064" cy="1031.2" r="2.3" fill="#e85820"/>
<text x="1060.5" y="1057.7" fill="#e85820" font-size="15" font-weight="bold" font-family="Liberation Sans" text-anchor="middle">-2</text>
<circle cx="1115.8" cy="1052.2" r="2.3" fill="#e85820"/>
<polygon points="1120,890 1128,890 1144.4,884 1161.5,880.7 1171.9,877 1176,873.3 1176,858.5 1172.6,852.6 1163,842.2 1155.6,840 1148,840 1143.7,842.2 1138.5,851 1129.6,868.9 1122,882" fill="#0000ff"/>
<polygon points="1480,800 1485,801.7 1531.7,834.2 1531.7,838 1498.3,838 1497.5,840 1468.3,840 1466.2,836.7 1466.2,824.2 1468.3,815.8 1473.3,805" fill="#ff0000"/>
<g shape-rendering="crispEdges"><rect x="1786" y="472" width="2" height="2" fill="#3d4658"/><rect x="1786" y="470" width="2" height="2" fill="#ffffff"/><rect x="1782" y="474" width="2" height="2" fill="#3d4658"/><rect x="1782" y="472" width="2" height="2" fill="#ffffff"/><rect x="1790" y="474" width="2" height="2" fill="#3d4658"/><rect x="1790" y="472" width="2" height="2" fill="#ffffff"/><rect x="1778" y="476" width="2" height="2" fill="#3d4658"/><rect x="1778" y="474" width="2" height="2" fill="#ffffff"/><rect x="1794" y="476" width="2" height="2" fill="#3d4658"/><rect x="1794" y="474" width="2" height="2" fill="#ffffff"/><rect x="1778" y="480" width="2" height="2" fill="#3d4658"/><rect x="1778" y="478" width="2" height="2" fill="#ffffff"/><rect x="1794" y="480" width="2" height="2" fill="#3d4658"/><rect x="1794" y="478" width="2" height="2" fill="#ffffff"/><rect x="1778" y="484" width="2" height="2" fill="#3d4658"/><rect x="1778" y="482" width="2" height="2" fill="#ffffff"/><rect x="1794" y="484" width="2" height="2" fill="#3d4658"/><rect x="1794" y="482" width="2" height="2" fill="#ffffff"/><rect x="1778" y="488" width="2" height="2" fill="#3d4658"/><rect x="1778" y="486" width="2" height="2" fill="#ffffff"/><rect x="1794" y="488" width="2" height="2" fill="#3d4658"/><rect x="1794" y="486" width="2" height="2" fill="#ffffff"/><rect x="1782" y="490" width="2" height="2" fill="#3d4658"/><rect x="1782" y="488" width="2" height="2" fill="#ffffff"/><rect x="1790" y="490" width="2" height="2" fill="#3d4658"/><rect x="1790" y="488" width="2" height="2" fill="#ffffff"/><rect x="1786" y="492" width="2" height="2" fill="#3d4658"/><rect x="1786" y="490" width="2" height="2" fill="#ffffff"/><rect x="1818" y="472" width="2" height="2" fill="#3d4658"/><rect x="1818" y="470" width="2" height="2" fill="#40e040"/><rect x="1818" y="476" width="2" height="2" fill="#3d4658"/><rect x="1818" y="474" width="2" height="2" fill="#40e040"/><rect x="1818" y="480" width="2" height="2" fill="#3d4658"/><rect x="1818" y="478" width="2" height="2" fill="#40e040"/><rect x="1818" y="484" width="2" height="2" fill="#3d4658"/><rect x="1818" y="482" width="2" height="2" fill="#40e040"/><rect x="1818" y="488" width="2" height="2" fill="#3d4658"/><rect x="1818" y="486" width="2" height="2" fill="#40e040"/><rect x="1818" y="492" width="2" height="2" fill="#3d4658"/><rect x="1818" y="490" width="2" height="2" fill="#40e040"/><rect x="1808" y="482" width="2" height="2" fill="#3d4658"/><rect x="1808" y="480" width="2" height="2" fill="#f01848"/><rect x="1812" y="482" width="2" height="2" fill="#3d4658"/><rect x="1812" y="480" width="2" height="2" fill="#f01848"/><rect x="1816" y="482" width="2" height="2" fill="#3d4658"/><rect x="1816" y="480" width="2" height="2" fill="#f01848"/><rect x="1820" y="482" width="2" height="2" fill="#3d4658"/><rect x="1820" y="480" width="2" height="2" fill="#f01848"/><rect x="1824" y="482" width="2" height="2" fill="#3d4658"/><rect x="1824" y="480" width="2" height="2" fill="#f01848"/><rect x="1828" y="482" width="2" height="2" fill="#3d4658"/><rect x="1828" y="480" width="2" height="2" fill="#f01848"/><rect x="1826" y="474" width="2" height="2" fill="#3d4658"/><rect x="1826" y="472" width="2" height="2" fill="#1030f0"/><rect x="1822" y="478" width="2" height="2" fill="#3d4658"/><rect x="1822" y="476" width="2" height="2" fill="#1030f0"/><rect x="1814" y="486" width="2" height="2" fill="#3d4658"/><rect x="1814" y="484" width="2" height="2" fill="#1030f0"/><rect x="1810" y="490" width="2" height="2" fill="#3d4658"/><rect x="1810" y="488" width="2" height="2" fill="#1030f0"/><rect x="1818" y="480" width="2" height="2" fill="#ffffff"/><rect x="1840" y="476" width="2" height="2" fill="#3d4658"/><rect x="1840" y="474" width="2" height="2" fill="#ffffff"/><rect x="1840" y="488" width="2" height="2" fill="#3d4658"/><rect x="1840" y="486" width="2" height="2" fill="#ffffff"/><rect x="1844" y="476" width="2" height="2" fill="#3d4658"/><rect x="1844" y="474" width="2" height="2" fill="#ffffff"/><rect x="1844" y="488" width="2" height="2" fill="#3d4658"/><rect x="1844" y="486" width="2" height="2" fill="#ffffff"/><rect x="1848" y="476" width="2" height="2" fill="#3d4658"/><rect x="1848" y="474" width="2" height="2" fill="#ffffff"/><rect x="1848" y="488" width="2" height="2" fill="#3d4658"/><rect x="1848" y="486" width="2" height="2" fill="#ffffff"/><rect x="1852" y="476" width="2" height="2" fill="#3d4658"/><rect x="1852" y="474" width="2" height="2" fill="#ffffff"/><rect x="1852" y="488" width="2" height="2" fill="#3d4658"/><rect x="1852" y="486" width="2" height="2" fill="#ffffff"/><rect x="1856" y="476" width="2" height="2" fill="#3d4658"/><rect x="1856" y="474" width="2" height="2" fill="#ffffff"/><rect x="1856" y="488" width="2" height="2" fill="#3d4658"/><rect x="1856" y="486" width="2" height="2" fill="#ffffff"/><rect x="1860" y="476" width="2" height="2" fill="#3d4658"/><rect x="1860" y="474" width="2" height="2" fill="#ffffff"/><rect x="1860" y="488" width="2" height="2" fill="#3d4658"/><rect x="1860" y="486" width="2" height="2" fill="#ffffff"/><rect x="1864" y="476" width="2" height="2" fill="#3d4658"/><rect x="1864" y="474" width="2" height="2" fill="#ffffff"/><rect x="1864" y="488" width="2" height="2" fill="#3d4658"/><rect x="1864" y="486" width="2" height="2" fill="#ffffff"/><rect x="1840" y="480" width="2" height="2" fill="#3d4658"/><rect x="1840" y="478" width="2" height="2" fill="#ffffff"/><rect x="1864" y="480" width="2" height="2" fill="#3d4658"/><rect x="1864" y="478" width="2" height="2" fill="#ffffff"/><rect x="1840" y="484" width="2" height="2" fill="#3d4658"/><rect x="1840" y="482" width="2" height="2" fill="#ffffff"/><rect x="1864" y="484" width="2" height="2" fill="#3d4658"/><rect x="1864" y="482" width="2" height="2" fill="#ffffff"/><rect x="1852" y="482" width="2" height="2" fill="#3d4658"/><rect x="1852" y="478" width="2" height="4" fill="#ffffff"/><g shape-rendering="auto"><path d="M1885 473H1881L1878 477V484L1882 490" fill="none" stroke="#3d4658" stroke-width="2.4"/><path d="M1878 494H1885V486" fill="none" stroke="#3d4658" stroke-width="2.4"/><path d="M1885 471H1881L1878 475V482L1882 488" fill="none" stroke="#fff" stroke-width="2.4"/><path d="M1878 491H1884V484" fill="none" stroke="#fff" stroke-width="2.4"/><path d="M1892 493H1896L1899 488V481L1896 476" fill="none" stroke="#3d4658" stroke-width="2.4"/><path d="M1892 491H1896L1899 486V479L1895 473" fill="none" stroke="#fff" stroke-width="2.4"/><path d="M1898 471H1892V478" fill="none" stroke="#fff" stroke-width="2.4"/></g></g>
</svg>
<svg class="a" style="left:0;top:0" width="1920" height="48" viewBox="0 0 1920 48" shape-rendering="crispEdges">
<!-- computer -->
<g fill="none" stroke="#d6d6d6" stroke-width="2">
<path d="M19 7H49V9H51V29H49V31H19V29H17V9H19Z"/>
<rect x="22" y="11" width="25" height="17"/>
<path d="M19 33H49V35H51V39H49V41H19V39H17V35H19Z"/>
<path d="M25 21L31 15" shape-rendering="auto"/>
<path d="M40 37H48"/>
</g>
<rect x="20" y="36" width="3" height="2" fill="#ff1050"/>
<!-- gear -->
<path d="M92 6h4v2h-4zM106 6h4v2h-4zM90 8h2v2h-2zM96 8h2v2h-2zM104 8h2v2h-2zM110 8h2v2h-2zM88 10h2v2h-2zM98 10h6v2h-6zM112 10h2v2h-2zM88 12h2v2h-2zM112 12h2v2h-2zM90 14h2v2h-2zM110 14h2v2h-2zM90 16h2v2h-2zM98 16h6v2h-6zM110 16h2v2h-2zM86 18h6v2h-6zM96 18h2v2h-2zM104 18h2v2h-2zM110 18h6v2h-6zM84 20h2v2h-2zM94 20h2v2h-2zM106 20h2v2h-2zM116 20h2v2h-2zM84 22h2v2h-2zM94 22h2v2h-2zM100 22h2v2h-2zM106 22h2v2h-2zM116 22h2v2h-2zM84 24h2v2h-2zM94 24h2v2h-2zM106 24h2v2h-2zM116 24h2v2h-2zM86 26h6v2h-6zM96 26h2v2h-2zM104 26h2v2h-2zM110 26h6v2h-6zM90 28h2v2h-2zM98 28h6v2h-6zM110 28h2v2h-2zM90 30h2v2h-2zM110 30h2v2h-2zM88 32h2v2h-2zM112 32h2v2h-2zM88 34h2v2h-2zM98 34h6v2h-6zM112 34h2v2h-2zM90 36h2v2h-2zM96 36h2v2h-2zM104 36h2v2h-2zM110 36h2v2h-2zM92 38h4v2h-4zM106 38h4v2h-4z" fill="#d6d6d6"/>
<!-- doc plus -->
<g fill="none" stroke="#d6d6d6" stroke-width="2">
<path d="M151 7H183V33L175 41H151Z"/>
<path d="M175 41V33H183" />
<path d="M164 16H170V20H174V26H170V30H164V26H160V20H164Z"/>
</g>
<!-- mailbox -->
<g stroke="#000" stroke-width="2" stroke-linejoin="round" shape-rendering="auto">
<path d="M813 38V47H819V42H821V47H824V40Z" fill="#a02080"/>
<path d="M812 44H818V48H812ZM820 44H824V48H820Z" fill="#ff9020" stroke="none"/>
<path d="M802 7L806 3H813L832 11L837 16V33L830 39L822 40L808 32L801 27Z" fill="#30b4ff"/>
<path d="M802 16L822 26M822 40V22Q823 13 831 11" fill="none"/>
<path d="M827 31V21H832V26H827" fill="none" stroke-width="1.8"/>
<path d="M814 28L820 32" stroke-width="4"/>
</g>
<path d="M798 20L803 21L806 24L813 26V29L807 28L806 34L803 36L802 31L800 28Z" fill="#ff1050" shape-rendering="auto"/>
<path d="M806 27L813 29" stroke="#1040e0" stroke-width="2" shape-rendering="auto"/>
<!-- cube + checklist -->
<g fill="#3c64a0">
<path d="M863 22H868V24H872V26H878V28H884V26H888V24H892V22H896V20H863Z" opacity="0.9"/>
<rect x="898" y="22" width="18" height="2"/>
<rect x="866" y="32" width="4" height="4"/><rect x="874" y="32" width="40" height="4"/>
<rect x="866" y="38" width="4" height="4"/><rect x="874" y="38" width="14" height="4"/><rect x="890" y="38" width="18" height="4"/><rect x="910" y="38" width="4" height="4"/>
<rect x="866" y="44" width="4" height="4"/><rect x="874" y="44" width="10" height="4"/><rect x="886" y="44" width="28" height="4"/>
</g>
<g stroke="#000" stroke-width="2" stroke-linejoin="round" shape-rendering="auto">
<path d="M879 2L893 8V20L879 27L865 20V8Z" fill="#ffd838"/>
<path d="M865 8L879 14V27L865 20Z" fill="#ff8c28"/>
<path d="M879 14L893 8" fill="none"/>
<path d="M884 4L892 8L888 10L881 6Z" fill="#fff4e0" stroke="none"/>
</g>
<rect x="899" y="4" width="16" height="17" fill="#fff0e8" stroke="#000" stroke-width="2"/>
<path d="M901 11L905 16L913 6" fill="none" stroke="#38a870" stroke-width="3.5" shape-rendering="auto"/>
<!-- replicube (active) -->
<rect x="928" y="0" width="64" height="8" fill="#ff1050"/>
<path d="M939 2L943 6M980 2L984 -1" stroke="#000" stroke-width="2" shape-rendering="auto"/>
<rect x="938" y="16" width="4" height="2" fill="#000"/><rect x="980" y="14" width="4" height="2" fill="#000"/>
<g stroke="#000" stroke-width="2" stroke-linejoin="round" shape-rendering="auto">
<path d="M949 25L961 31V47L949 47L937 41V30Z" fill="#ff1050"/>
<path d="M937 30L949 24L961 29L949 35Z" fill="#a02080"/>
<path d="M949 35V47" fill="none"/>
<path d="M973 25L985 30V41L973 47L961 47V31Z" fill="#38a870"/>
<path d="M961 31L973 36V48H961Z" fill="#6b6058"/>
<path d="M961 31L973 25L985 30L973 36Z" fill="#38a870"/>
<path d="M955 36L961 31V47H951Z" fill="#6b6058" stroke="none"/>
<path d="M950 22Q961 32 973 22" fill="none" stroke="#1040e0" stroke-width="3"/>
<path d="M961 1L974 7V19L961 25L948 19V7Z" fill="#ffd838"/>
<path d="M948 7L961 13V25L948 19Z" fill="#ff8c28"/>
<path d="M961 13L974 7" fill="none"/>
<path d="M965 3L973 7L969 9L962 5Z" fill="#fff4e0" stroke="none"/>
</g>
<!-- palette -->
<path d="M1008 4H1052V20H1038V34H1008Z" fill="#000"/>
<rect x="1010" y="6" width="12" height="12" fill="#0028e8"/><rect x="1024" y="6" width="12" height="12" fill="#28a8ff"/><rect x="1038" y="6" width="12" height="12" fill="#38a870"/>
<rect x="1010" y="20" width="12" height="12" fill="#ff1050"/><rect x="1024" y="20" width="12" height="12" fill="#ff8c28"/>
<path d="M1035 39L1042 27L1055 33L1049 46Z" fill="#6b6058" shape-rendering="auto"/>
<path d="M1036 35L1042.500 23.500L1055 30L1048 43Z" fill="#ffd838" stroke="#000" stroke-width="2" stroke-linejoin="round" shape-rendering="auto"/>
<!-- people bubble -->
<g shape-rendering="auto">
<path d="M1085 0Q1083 8 1084 16Q1086 24 1088 27L1090 33L1097 27Q1110 30 1116 20Q1120 10 1116 0Z" fill="#fff0e8"/>
<path d="M1101 2L1111 7V19L1101 24L1091 19V7Z" fill="#ffd838" stroke="#000" stroke-width="2" stroke-linejoin="round"/>
<path d="M1091 7L1101 12V24L1091 19Z" fill="#ff8c28" stroke="#000" stroke-width="2" stroke-linejoin="round"/>
<path d="M1101 12L1111 7" stroke="#000" stroke-width="2"/>
<circle cx="1083" cy="28" r="6.500" fill="#000"/><path d="M1074 48V42Q1075 35 1083 34Q1091 35 1092 42V48Z" fill="#000"/>
<circle cx="1118" cy="28" r="6.500" fill="#000"/><path d="M1109 48V42Q1110 35 1118 34Q1126 35 1127 42V48Z" fill="#000"/>
</g>
<!-- stop & next -->
<rect x="1432" y="16" width="12" height="14" fill="#fff0e8"/><rect x="1432" y="30" width="12" height="2" fill="#6a625a"/>
<path d="M1466 16H1470L1475 23L1470 30H1466L1470.500 23ZM1471.500 16H1475.500L1480.500 23L1475.500 30H1471.500L1476 23Z" fill="#fff0e8" shape-rendering="auto"/>
</svg>

<span id="t0" class="tx" style="left:1490px;top:14.35px;font-size:19.55px;color:#fff0e8;transform:scaleX(0.8516);">Cubist Bossa</span>
<span id="t1" class="tx" style="left:1799px;top:4.35px;font-size:19.55px;color:#fff0e8;transform:scaleX(0.8379);">THU 2025.1.23</span>
<span id="t2" class="tx" style="left:1838px;top:26.35px;font-size:19.55px;color:#fff0e8;transform:scaleX(0.8611);">08:46 PM</span>
<span id="t3" class="tx" style="left:920px;top:60.35px;font-size:19.55px;color:#000;transform:scaleX(0.7316);">REPLICUBE</span>
<span id="t4" class="tx" style="left:22px;top:94.35px;font-size:19.55px;color:#fff0e8;transform:scaleX(0.8255);">RepliCUBE Actions</span>
<span id="t5" class="tx" style="left:682px;top:130.35px;font-size:19.55px;color:#000;transform:scaleX(0.9515);">Documentation</span>
<span id="t6" class="tx" style="left:828px;top:130.35px;font-size:19.55px;color:#2c2420;transform:scaleX(0.9351);">Settings</span>
<span id="t7" class="tx" style="left:682px;top:162.35px;font-size:19.55px;color:#000;transform:scaleX(0.9827);">Overview</span>
<span id="t8" class="tx" style="left:682px;top:192.35px;font-size:19.55px;color:#fff0e8;transform:scaleX(0.9796);">Geometry</span>
<span id="t9" class="tx" style="left:682px;top:222.35px;font-size:19.55px;color:#000;transform:scaleX(0.8137);">Code</span>
<span id="t10" class="tx" style="left:682px;top:252.35px;font-size:19.55px;color:#000;transform:scaleX(0.8580);">Free Edit</span>
<span id="t11" class="tx" style="left:924px;top:160.35px;font-size:19.55px;color:#000;transform:scaleX(0.9721);">The center of the object is at (0,0,0).</span>
<span id="t12" class="tx" style="left:924px;top:204.35px;font-size:19.55px;color:#000;transform:scaleX(0.9595);">Values for</span>
<span id="t13" class="tx" style="left:1013px;top:204.35px;font-size:19.55px;color:#000;transform:scaleX(1.1182);"><span style="color:#f02020">x</span>,</span>
<span id="t14" class="tx" style="left:1036px;top:204.35px;font-size:19.55px;color:#000;transform:scaleX(1.1986);"><span style="color:#30d830">y</span>,</span>
<span id="t15" class="tx" style="left:1058px;top:204.35px;font-size:19.55px;color:#000;transform:scaleX(0.8284);">and</span>
<span id="t16" class="tx" style="left:1091.5px;top:204.35px;font-size:19.55px;color:#1020f0;transform:scaleX(0.7168);">z</span>
<span id="t17" class="tx" style="left:1104px;top:204.35px;font-size:19.55px;color:#000;transform:scaleX(0.9420);">can be negative or positive.</span>
<span id="t18" class="tx" style="left:924px;top:248.35px;font-size:19.55px;color:#000;transform:scaleX(0.9484);">Positive values are toward the arrows.</span>
<span id="t19" class="tx" style="left:924px;top:292.35px;font-size:19.55px;color:#000;transform:scaleX(0.9353);">If you want to "peek inside" the object, you can DRAG the axis arrowheads!</span>
<span id="t20" class="tx" style="left:22px;top:958.35px;font-size:19.55px;color:#3c5a8a;transform:scaleX(0.8038);">Code size: 17</span>
<span id="t21" class="tx" style="left:467px;top:958.35px;font-size:19.55px;color:#3c5a8a;transform:scaleX(0.9156);">Cycles / voxel: 13.00</span>
<span id="t22" class="tx" style="left:116px;top:989.35px;font-size:19.55px;color:#000;transform:scaleX(0.8236);">RUN CODE (CTRL+R)</span>
<span id="t23" class="tx" style="left:394px;top:989.35px;font-size:19.55px;color:#000;transform:scaleX(0.9160);">Auto run code as I type</span>
<span id="t24" class="tx" style="left:1599px;top:1032.35px;font-size:19.55px;color:#ffffff;transform:scaleX(0.9494);text-shadow:-2px 0 #1c2438,2px 0 #1c2438,0 -2px #1c2438,0 2px #1c2438,-1px -1px #1c2438,1px 1px #1c2438,-1px 1px #1c2438,1px -1px #1c2438;">Playtest Version 03B (January 2025)</span>
<span id="t25" class="tx" style="left:30.5px;top:1032.35px;font-size:19.55px;color:#000;transform:scaleX(0.4598);">1</span>
<span id="t26" class="tx" style="left:67.75px;top:1032.35px;font-size:19.55px;color:#000;transform:scaleX(0.7816);">2</span>
<span id="t27" class="tx" style="left:106.75px;top:1032.35px;font-size:19.55px;color:#0a0c0e;transform:scaleX(0.7816);">3</span>
<span id="t28" class="tx" style="left:145.75px;top:1032.35px;font-size:19.55px;color:#000;transform:scaleX(0.7816);">4</span>
<span id="t29" class="tx" style="left:185.75px;top:1032.35px;font-size:19.55px;color:#000;transform:scaleX(0.7816);">5</span>
<span id="t30" class="tx" style="left:224.75px;top:1032.35px;font-size:19.55px;color:#000;transform:scaleX(0.7816);">6</span>
<span id="t31" class="tx" style="left:263.75px;top:1032.35px;font-size:19.55px;color:#000;transform:scaleX(0.7816);">7</span>
<span id="t32" class="tx" style="left:303.75px;top:1032.35px;font-size:19.55px;color:#000;transform:scaleX(0.7816);">8</span>
<span id="t33" class="tx" style="left:342.75px;top:1032.35px;font-size:19.55px;color:#000;transform:scaleX(0.7816);">9</span>
<span id="t34" class="tx" style="left:378.25px;top:1032.35px;font-size:19.55px;color:#000;transform:scaleX(0.7132);">10</span>
<span id="t35" class="tx" style="left:418.75px;top:1032.35px;font-size:19.55px;color:#000;transform:scaleX(0.6163);">11</span>
<span id="t36" class="tx" style="left:456.25px;top:1032.35px;font-size:19.55px;color:#000;transform:scaleX(0.7132);">12</span>
<span id="t37" class="tx" style="left:496.25px;top:1032.35px;font-size:19.55px;color:#000;transform:scaleX(0.7132);">13</span>
<span id="t38" class="tx" style="left:535.25px;top:1032.35px;font-size:19.55px;color:#000;transform:scaleX(0.7132);">14</span>
<span id="t39" class="tx" style="left:574.25px;top:1032.35px;font-size:19.55px;color:#000;transform:scaleX(0.7132);">15</span>
<span id="t40" class="tx" style="left:614.25px;top:1032.35px;font-size:19.55px;color:#000;transform:scaleX(0.7132);">16</span>
</body></html>
